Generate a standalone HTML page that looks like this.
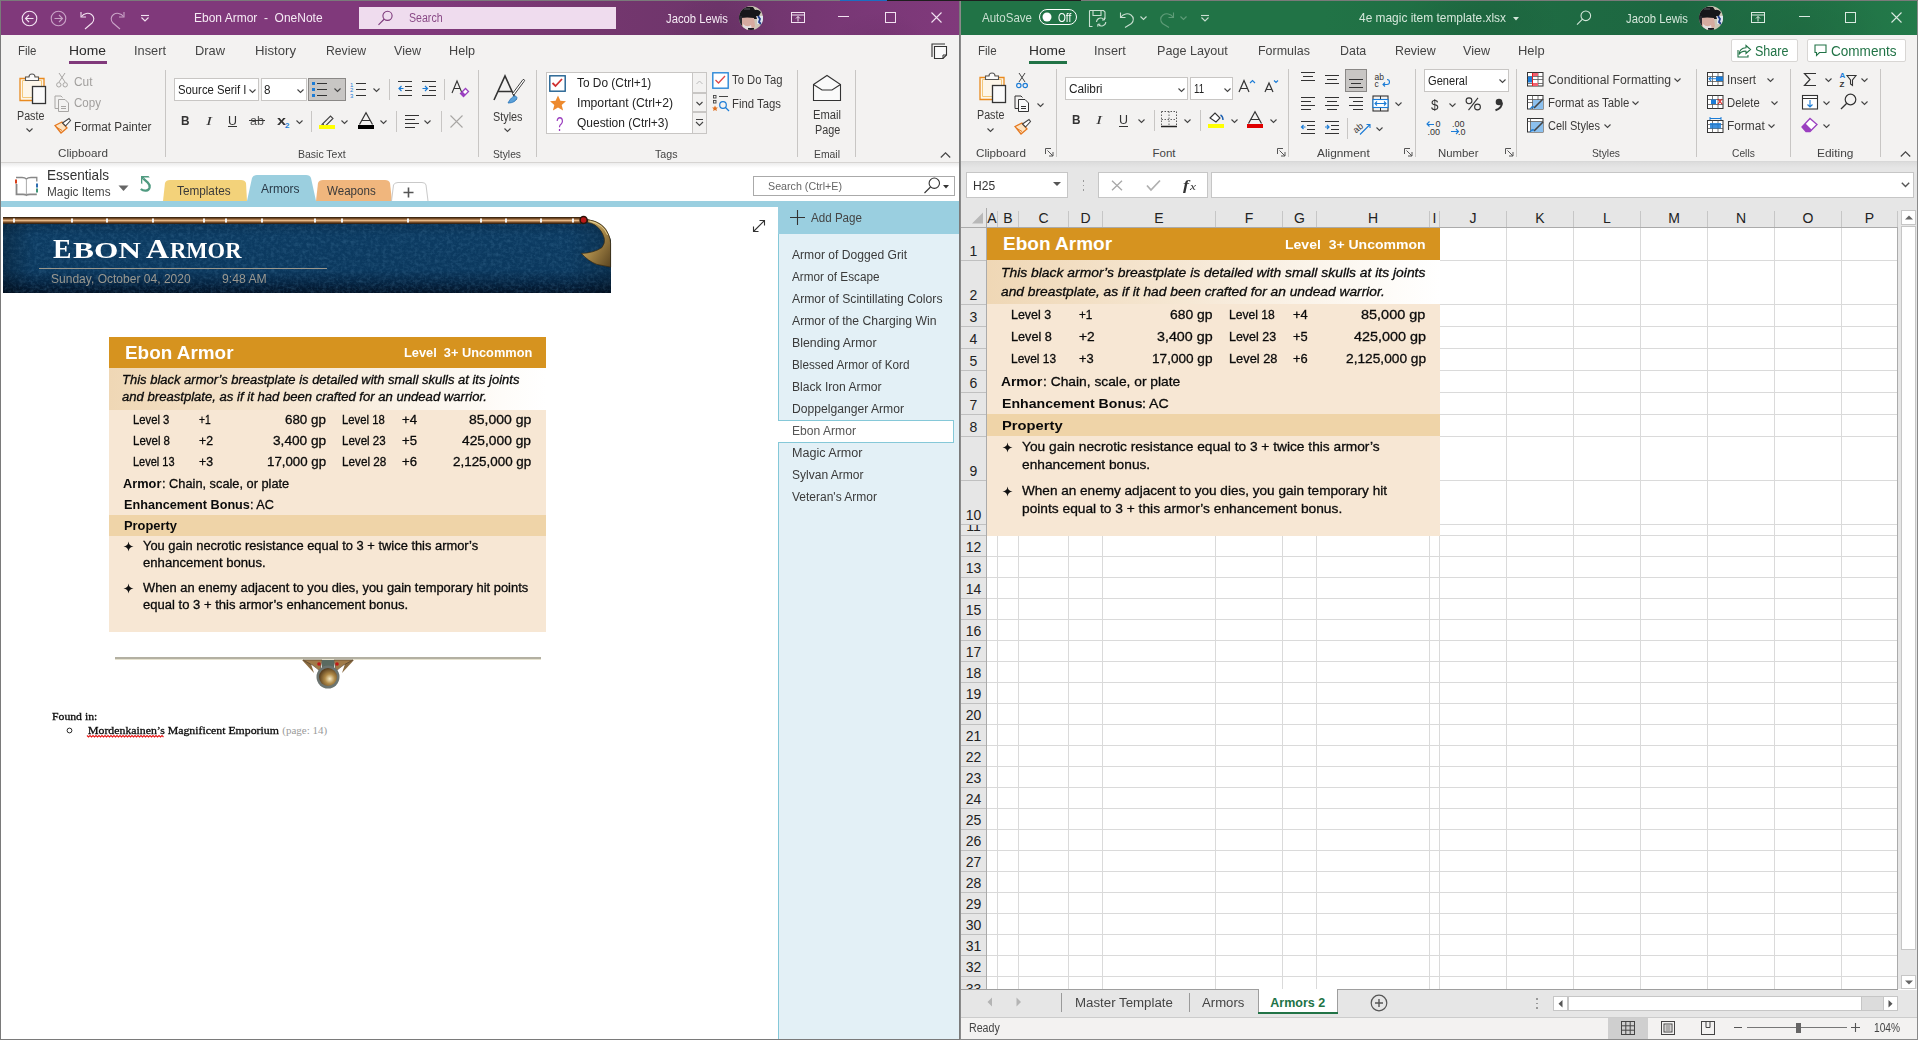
<!DOCTYPE html><html><head><meta charset="utf-8"><style>html,body{margin:0;padding:0;width:1918px;height:1040px;overflow:hidden;position:relative;background:#fff;font-family:'Liberation Sans',sans-serif}
.a{position:absolute;box-sizing:border-box}
svg.a{overflow:visible}
.t{position:absolute;white-space:pre;line-height:1;transform-origin:0 0}</style></head><body><div class="a" style="left:0px;top:0px;width:1918px;height:1px;background:#7a7a7a;"></div>
<div class="a" style="left:840px;top:0px;width:47px;height:1px;background:#1b6ec2;"></div>
<div class="a" style="left:887px;top:0px;width:194px;height:1px;background:#1e1e1e;"></div>
<div class="a" style="left:0;top:1px;width:960px;height:34px;background:linear-gradient(90deg,#80397b 0%,#80397b 45%,#75376f 60%,#6e356b 75%,#7a3877 90%,#80397b 100%)"></div>
<div class="a" style="left:640px;top:1px;width:300px;height:34px;background:radial-gradient(ellipse 60px 40px at 80px 30px,rgba(0,0,0,0.06),transparent),radial-gradient(ellipse 50px 30px at 240px 40px,rgba(0,0,0,0.05),transparent)"></div>
<div class="a" style="left:0px;top:0px;width:1px;height:1040px;background:#7a7a7a;"></div>
<svg class="a" style="left:21px;top:10px;" width="17" height="17" viewBox="0 0 17 17"><circle cx="8.5" cy="8.5" r="7.3" fill="none" stroke="#f2e2f1" stroke-width="1.1"/><path d="M4.5 8.5h8M8 5L4.5 8.5 8 12" fill="none" stroke="#f2e2f1" stroke-width="1.1"/></svg>
<svg class="a" style="left:50px;top:10px;" width="17" height="17" viewBox="0 0 17 17"><circle cx="8.5" cy="8.5" r="7.3" fill="none" stroke="#c9a3c7" stroke-width="1.1"/><path d="M4.5 8.5h8M9 5l3.5 3.5L9 12" fill="none" stroke="#c9a3c7" stroke-width="1.1"/></svg>
<svg class="a" style="left:79px;top:10px;" width="17" height="18" viewBox="0 0 17 18"><path d="M2 2v5h5" fill="none" stroke="#f2e2f1" stroke-width="1.1"/><path d="M2.5 6.5C5 3 9.5 2.5 12.5 4.5c3 2.2 3 6 0.5 8.5L6 19" fill="none" stroke="#f2e2f1" stroke-width="1.1"/></svg>
<svg class="a" style="left:109px;top:10px;" width="17" height="18" viewBox="0 0 17 18"><path d="M15 2v5h-5" fill="none" stroke="#c9a3c7" stroke-width="1.1"/><path d="M14.5 6.5C12 3 7.5 2.5 4.5 4.5c-3 2.2-3 6-0.5 8.5L11 19" fill="none" stroke="#c9a3c7" stroke-width="1.1"/></svg>
<svg class="a" style="left:140px;top:14px;" width="10" height="8" viewBox="0 0 10 8"><path d="M1 1.5h8" stroke="#f2e2f1" stroke-width="1.1"/><path d="M1.5 3.5L5 7l3.5-3.5" fill="none" stroke="#f2e2f1" stroke-width="1.1"/></svg>
<div class="t" style="left:194.4px;top:11px;font-family:'Liberation Sans', sans-serif;font-size:13px;font-weight:400;font-style:normal;color:#f6ebf5;transform:scaleX(0.9222);">Ebon Armor  -  OneNote</div>
<div class="a" style="left:359px;top:7px;width:257px;height:22px;background:#efdcee;"></div>
<svg class="a" style="left:377px;top:10px;" width="17" height="16" viewBox="0 0 17 16"><circle cx="10.5" cy="5.8" r="4.6" fill="none" stroke="#7d3a7b" stroke-width="1.1"/><path d="M7.3 9L1.5 14.8" stroke="#7d3a7b" stroke-width="1.1"/></svg>
<div class="t" style="left:409.4px;top:12px;font-family:'Liberation Sans', sans-serif;font-size:12.5px;font-weight:400;font-style:normal;color:#8a4a87;transform:scaleX(0.8483);">Search</div>
<div class="t" style="left:665.8px;top:12px;font-family:'Liberation Sans', sans-serif;font-size:13px;font-weight:400;font-style:normal;color:#f6ebf5;transform:scaleX(0.8666);">Jacob Lewis</div>
<svg class="a" style="left:739px;top:6px;" width="24" height="24" viewBox="0 0 24 24"><defs><clipPath id="cp739"><circle cx="12" cy="12" r="12"/></clipPath></defs><g clip-path="url(#cp739)"><rect width="24" height="24" fill="#cdc6b6"/><path d="M0 4Q6 0 14 1L16 4Q19 3 22 6L20 10H17L18 13H0z" fill="#17171a"/><path d="M5 2h6v2H5z" fill="#3a3a3e"/><path d="M2 12Q8 11 15 12L16 20Q14 24 9 24H3Q1 18 2 12z" fill="#d6aba0"/><path d="M4 18Q8 22 12 19L13 24H4z" fill="#e2dede"/><path d="M0 10H3V24H0z" fill="#2a2a30"/><path d="M9 22h6v2H9z" fill="#1a1a22"/><path d="M18 10h6v8h-6z" fill="#dfe6f0"/><path d="M19 10l2 3-1 3 2 2" fill="none" stroke="#233f8a" stroke-width="1.8"/></g></svg>
<svg class="a" style="left:791px;top:12px;" width="14" height="11" viewBox="0 0 14 11"><rect x="0.5" y="0.5" width="13" height="10" fill="none" stroke="#f2e2f1" stroke-width="1"/><path d="M0.5 3h13" stroke="#f2e2f1"/><path d="M7 9.5V4.5M5 6.5l2-2 2 2" fill="none" stroke="#f2e2f1"/></svg>
<svg class="a" style="left:838px;top:16px;" width="11" height="2" viewBox="0 0 11 2"><path d="M0 0.5h11" stroke="#f2e2f1" stroke-width="1"/></svg>
<svg class="a" style="left:884.7px;top:12px;" width="11" height="11" viewBox="0 0 11 11"><rect x="0.5" y="0.5" width="10" height="10" fill="none" stroke="#f2e2f1" stroke-width="1"/></svg>
<svg class="a" style="left:930.5px;top:12px;" width="11" height="11" viewBox="0 0 11 11"><path d="M0.5 0.5l10 10M10.5 0.5l-10 10" stroke="#f2e2f1" stroke-width="1.1"/></svg>
<div class="a" style="left:1px;top:35px;width:958px;height:127px;background:#f3f2f1;"></div>
<div class="a" style="left:1px;top:162px;width:958px;height:1px;background:#d6d4d2;"></div>
<div class="t" style="left:18.0px;top:44px;font-family:'Liberation Sans', sans-serif;font-size:13.5px;font-weight:400;font-style:normal;color:#444;transform:scaleX(0.8500);">File</div>
<div class="t" style="left:69.0px;top:44px;font-family:'Liberation Sans', sans-serif;font-size:13.5px;font-weight:400;font-style:normal;color:#2b2b2b;transform:scaleX(1.0273);">Home</div>
<div class="t" style="left:134.0px;top:44px;font-family:'Liberation Sans', sans-serif;font-size:13.5px;font-weight:400;font-style:normal;color:#444;transform:scaleX(0.9477);">Insert</div>
<div class="t" style="left:195.0px;top:44px;font-family:'Liberation Sans', sans-serif;font-size:13.5px;font-weight:400;font-style:normal;color:#444;transform:scaleX(0.9519);">Draw</div>
<div class="t" style="left:255.0px;top:44px;font-family:'Liberation Sans', sans-serif;font-size:13.5px;font-weight:400;font-style:normal;color:#444;transform:scaleX(0.9758);">History</div>
<div class="t" style="left:326.0px;top:44px;font-family:'Liberation Sans', sans-serif;font-size:13.5px;font-weight:400;font-style:normal;color:#444;transform:scaleX(0.9036);">Review</div>
<div class="t" style="left:394.0px;top:44px;font-family:'Liberation Sans', sans-serif;font-size:13.5px;font-weight:400;font-style:normal;color:#444;transform:scaleX(0.9300);">View</div>
<div class="t" style="left:449.0px;top:44px;font-family:'Liberation Sans', sans-serif;font-size:13.5px;font-weight:400;font-style:normal;color:#444;transform:scaleX(0.9364);">Help</div>
<div class="a" style="left:69px;top:61px;width:38px;height:3px;background:#80397b;"></div>
<div class="a" style="left:165px;top:70px;width:1px;height:87px;background:#c8c6c4;"></div>
<div class="a" style="left:478px;top:70px;width:1px;height:87px;background:#c8c6c4;"></div>
<div class="a" style="left:536px;top:70px;width:1px;height:87px;background:#c8c6c4;"></div>
<div class="a" style="left:797px;top:70px;width:1px;height:87px;background:#c8c6c4;"></div>
<div class="a" style="left:855px;top:70px;width:1px;height:87px;background:#c8c6c4;"></div>
<svg class="a" style="left:19px;top:73px;" width="28" height="32" viewBox="0 0 28 32"><path d="M1 5.5h6v-1h12v1h6v22H1z" fill="#fdf6e9" stroke="#e98a1f" stroke-width="1.3"/><path d="M3.5 7.5h19v17h-19z" fill="none" stroke="#f4c87a" stroke-width="1"/><path d="M6.5 7.5v-3.5h3.5c0-2 1-3 3-3s3 1 3 3h3.5v3.5z" fill="#fafafa" stroke="#555" stroke-width="1.1"/><rect x="13.5" y="13.5" width="13" height="17" fill="#fafafa" stroke="#333" stroke-width="1.3"/></svg>
<div class="t" style="left:16.6px;top:110px;font-family:'Liberation Sans', sans-serif;font-size:12.5px;font-weight:400;font-style:normal;color:#3b3a39;transform:scaleX(0.8571);">Paste</div>
<svg class="a" style="left:26px;top:128px;" width="7" height="4.5" viewBox="0 0 7 4.5"><path d="M0.5 0.5L3.5 3.5L6.5 0.5" fill="none" stroke="#444" stroke-width="1.1"/></svg>
<svg class="a" style="left:56px;top:72px;" width="12" height="16" viewBox="0 0 12 16"><path d="M3 1l6 9M9 1L3 10" stroke="#a8a6a4" stroke-width="1"/><circle cx="2.8" cy="12.8" r="2.2" fill="none" stroke="#a8a6a4"/><circle cx="9.2" cy="12.8" r="2.2" fill="none" stroke="#a8a6a4"/></svg>
<div class="t" style="left:73.5px;top:76px;font-family:'Liberation Sans', sans-serif;font-size:12.5px;font-weight:400;font-style:normal;color:#a19f9d;transform:scaleX(0.9510);">Cut</div>
<svg class="a" style="left:54px;top:95px;" width="17" height="17" viewBox="0 0 17 17"><path d="M4.5 13.5h-3.5v-12.5h6l1.5 1.5" fill="none" stroke="#a8a6a4"/><path d="M4.5 4.5h6.5l3.5 3.5v8.5h-10z" fill="none" stroke="#a8a6a4"/><path d="M7 11.5h5M7 13.5h5" stroke="#a8a6a4"/></svg>
<div class="t" style="left:73.5px;top:97px;font-family:'Liberation Sans', sans-serif;font-size:12.5px;font-weight:400;font-style:normal;color:#a19f9d;transform:scaleX(0.9251);">Copy</div>
<svg class="a" style="left:54px;top:118px;" width="17" height="16" viewBox="0 0 17 16"><path d="M1 7.5l7-3.5 5 6-6 5z" fill="#fde3c1" stroke="#e5781f" stroke-width="1.3"/><path d="M3 9.5l5 3" stroke="#e5781f"/><path d="M8.5 5l6.5-4.5 1.5 2-5 5.5z" fill="#fff" stroke="#444" stroke-width="1.1"/></svg>
<div class="t" style="left:73.5px;top:121px;font-family:'Liberation Sans', sans-serif;font-size:12.5px;font-weight:400;font-style:normal;color:#3b3a39;transform:scaleX(0.9374);">Format Painter</div>
<div class="t" style="left:57.5px;top:148px;font-family:'Liberation Sans', sans-serif;font-size:11.5px;font-weight:400;font-style:normal;color:#444;transform:scaleX(1.0156);">Clipboard</div>
<div class="a" style="left:174px;top:78px;width:85px;height:23px;background:#fff;border:1px solid #c8c6c4"></div>
<div class="t" style="left:177.5px;top:84px;font-family:'Liberation Sans', sans-serif;font-size:12.5px;font-weight:400;font-style:normal;color:#222;transform:scaleX(0.9045);">Source Serif I</div>
<svg class="a" style="left:249px;top:88.5px;" width="7" height="4.5" viewBox="0 0 7 4.5"><path d="M0.5 0.5L3.5 3.5L6.5 0.5" fill="none" stroke="#444" stroke-width="1.1"/></svg>
<div class="a" style="left:261px;top:78px;width:46px;height:23px;background:#fff;border:1px solid #c8c6c4"></div>
<div class="t" style="left:263.8px;top:84px;font-family:'Liberation Sans', sans-serif;font-size:12.5px;font-weight:400;font-style:normal;color:#222;transform:scaleX(0.9348);">8</div>
<svg class="a" style="left:297px;top:88.5px;" width="7" height="4.5" viewBox="0 0 7 4.5"><path d="M0.5 0.5L3.5 3.5L6.5 0.5" fill="none" stroke="#444" stroke-width="1.1"/></svg>
<div class="a" style="left:308px;top:78px;width:38px;height:23px;background:#c8c6c4;border:1px solid #8a8886"></div>
<svg class="a" style="left:311px;top:81px;" width="18" height="16" viewBox="0 0 18 16"><rect x="1" y="1" width="3" height="3" fill="#1c7cd6"/><rect x="1" y="7" width="3" height="3" fill="#1c7cd6"/><rect x="1" y="13" width="3" height="3" fill="#1c7cd6"/><path d="M6 2.5h10M6 8.5h10M6 14.5h10" stroke="#333" stroke-width="1.1"/></svg>
<svg class="a" style="left:334px;top:88px;" width="7" height="4.5" viewBox="0 0 7 4.5"><path d="M0.5 0.5L3.5 3.5L6.5 0.5" fill="none" stroke="#444" stroke-width="1.1"/></svg>
<svg class="a" style="left:350px;top:81px;" width="17" height="17" viewBox="0 0 17 17"><text x="0" y="5.5" font-size="6" font-family="Liberation Sans" fill="#1c7cd6">1</text><text x="0" y="11" font-size="6" font-family="Liberation Sans" fill="#1c7cd6">2</text><text x="0" y="16.5" font-size="6" font-family="Liberation Sans" fill="#1c7cd6">3</text><path d="M6 2.5h10M6 8.5h10M6 14.5h10" stroke="#333" stroke-width="1.1"/></svg>
<svg class="a" style="left:373px;top:88px;" width="7" height="4.5" viewBox="0 0 7 4.5"><path d="M0.5 0.5L3.5 3.5L6.5 0.5" fill="none" stroke="#444" stroke-width="1.1"/></svg>
<div class="a" style="left:389px;top:79px;width:1px;height:21px;background:#c8c6c4;"></div>
<svg class="a" style="left:398px;top:81px;" width="15" height="15" viewBox="0 0 15 15"><path d="M0 0.5h14M7 5.5h7M7 9.5h7M0 14.5h14" stroke="#333" stroke-width="1.1"/><path d="M5.5 7.5H1M3.5 5L1 7.5 3.5 10" fill="none" stroke="#1c7cd6" stroke-width="1.2"/></svg>
<svg class="a" style="left:422px;top:81px;" width="15" height="15" viewBox="0 0 15 15"><path d="M0 0.5h14M7 5.5h7M7 9.5h7M0 14.5h14" stroke="#333" stroke-width="1.1"/><path d="M0.5 7.5H5.5M3 5l2.5 2.5L3 10" fill="none" stroke="#1c7cd6" stroke-width="1.2"/></svg>
<div class="a" style="left:444px;top:79px;width:1px;height:21px;background:#c8c6c4;"></div>
<svg class="a" style="left:451px;top:80px;" width="18" height="18" viewBox="0 0 18 18"><path d="M1 13L6 1l5 12M3 8.5h6" fill="none" stroke="#333" stroke-width="1.1"/><path d="M9.5 13.5l5-5 3 3-5 5z" fill="#fff" stroke="#9a3fc0" stroke-width="1.3"/><path d="M9.5 13.5l2-2 3 3-2 2z" fill="#9a3fc0"/></svg>
<div class="t" style="left:181.0px;top:114px;font-family:'Liberation Sans', sans-serif;font-size:13px;font-weight:700;font-style:normal;color:#333;transform:scaleX(0.9052);">B</div>
<div class="t" style="left:205.5px;top:114px;font-family:'Liberation Serif', serif;font-size:13px;font-weight:400;font-style:italic;color:#333;transform:scaleX(1.3813);">I</div>
<div class="t" style="left:228.0px;top:114px;font-family:'Liberation Sans', sans-serif;font-size:13px;font-weight:400;font-style:normal;color:#333;transform:scaleX(0.9584);">U</div>
<div class="a" style="left:228px;top:126px;width:9px;height:1px;background:#333;"></div>
<div class="t" style="left:249.5px;top:115px;font-family:'Liberation Sans', sans-serif;font-size:12.5px;font-weight:400;font-style:normal;color:#555;transform:scaleX(1.0067);">ab</div>
<div class="a" style="left:249px;top:120px;width:16px;height:1px;background:#333;"></div>
<div class="t" style="left:277.0px;top:114px;font-family:'Liberation Sans', sans-serif;font-size:13px;font-weight:700;font-style:normal;color:#333;transform:scaleX(1.2441);">x</div>
<div class="t" style="left:285.0px;top:122px;font-family:'Liberation Sans', sans-serif;font-size:8px;font-weight:700;font-style:normal;color:#1c7cd6;">2</div>
<svg class="a" style="left:296px;top:120px;" width="7" height="4.5" viewBox="0 0 7 4.5"><path d="M0.5 0.5L3.5 3.5L6.5 0.5" fill="none" stroke="#444" stroke-width="1.1"/></svg>
<div class="a" style="left:311px;top:111px;width:1px;height:21px;background:#c8c6c4;"></div>
<svg class="a" style="left:319px;top:113px;" width="17" height="16" viewBox="0 0 17 16"><path d="M3 11.5L11.5 3l2.5 2.5L5.5 14H3z" fill="none" stroke="#444" stroke-width="1.1"/><path d="M1.5 14L5 11" stroke="#444"/></svg>
<div class="a" style="left:319px;top:125px;width:16px;height:4px;background:#ffff00;"></div>
<svg class="a" style="left:341px;top:120px;" width="7" height="4.5" viewBox="0 0 7 4.5"><path d="M0.5 0.5L3.5 3.5L6.5 0.5" fill="none" stroke="#444" stroke-width="1.1"/></svg>
<svg class="a" style="left:358px;top:112px;" width="16" height="13" viewBox="0 0 16 13"><path d="M1.5 12.5L8 0.8l6.5 11.7M4 8.5h8" fill="none" stroke="#333" stroke-width="1.2"/></svg>
<div class="a" style="left:358px;top:125px;width:16px;height:4px;background:#000;"></div>
<svg class="a" style="left:380px;top:120px;" width="7" height="4.5" viewBox="0 0 7 4.5"><path d="M0.5 0.5L3.5 3.5L6.5 0.5" fill="none" stroke="#444" stroke-width="1.1"/></svg>
<div class="a" style="left:396px;top:111px;width:1px;height:21px;background:#c8c6c4;"></div>
<svg class="a" style="left:405px;top:114px;" width="15" height="14" viewBox="0 0 15 14"><path d="M0 1.5h14M0 5.5h10M0 9.5h14M0 13.5h10" stroke="#333" stroke-width="1.1"/></svg>
<svg class="a" style="left:424px;top:120px;" width="7" height="4.5" viewBox="0 0 7 4.5"><path d="M0.5 0.5L3.5 3.5L6.5 0.5" fill="none" stroke="#444" stroke-width="1.1"/></svg>
<div class="a" style="left:441px;top:111px;width:1px;height:21px;background:#c8c6c4;"></div>
<svg class="a" style="left:450px;top:115px;" width="13" height="13" viewBox="0 0 13 13"><path d="M0.5 0.5l12 12M12.5 0.5l-12 12" stroke="#a8a6a4" stroke-width="1.1"/></svg>
<div class="t" style="left:298.0px;top:149px;font-family:'Liberation Sans', sans-serif;font-size:11.5px;font-weight:400;font-style:normal;color:#444;transform:scaleX(0.9118);">Basic Text</div>
<svg class="a" style="left:493px;top:75px;" width="32" height="30" viewBox="0 0 32 30"><path d="M1 25L12 1l11 24M5.5 16.5h13" fill="none" stroke="#333" stroke-width="1.6"/><path d="M31 5L20 20" stroke="#444" stroke-width="1.1"/><path d="M31 4.5c1 0.5 0.5 1.5 0 2L21 20l-1.5-1.5L30 4.5z" fill="#fff" stroke="#444"/><path d="M15 28c2-4 5-7 7-7 1 0 2 1 2 2-1 3-4 5-9 5z" fill="#5aa0d8" stroke="#2b73b8" stroke-width="0.8"/></svg>
<div class="t" style="left:493.0px;top:111px;font-family:'Liberation Sans', sans-serif;font-size:12.5px;font-weight:400;font-style:normal;color:#3b3a39;transform:scaleX(0.8665);">Styles</div>
<svg class="a" style="left:504px;top:128px;" width="7" height="4.5" viewBox="0 0 7 4.5"><path d="M0.5 0.5L3.5 3.5L6.5 0.5" fill="none" stroke="#444" stroke-width="1.1"/></svg>
<div class="t" style="left:493.0px;top:149px;font-family:'Liberation Sans', sans-serif;font-size:11.5px;font-weight:400;font-style:normal;color:#444;transform:scaleX(0.8938);">Styles</div>
<div class="a" style="left:546px;top:72px;width:147px;height:62px;background:#fff;border:1px solid #c8c6c4"></div>
<svg class="a" style="left:549px;top:75px;" width="18" height="17" viewBox="0 0 18 17"><rect x="0.8" y="0.8" width="15.4" height="15.4" fill="#fff" stroke="#1f5f8f" stroke-width="1.4"/><path d="M3.5 8l3 3 6.5-7" fill="none" stroke="#d03030" stroke-width="1.8"/></svg>
<div class="t" style="left:577.0px;top:77px;font-family:'Liberation Sans', sans-serif;font-size:12.5px;font-weight:400;font-style:normal;color:#222;transform:scaleX(0.9507);">To Do (Ctrl+1)</div>
<svg class="a" style="left:549px;top:95px;" width="18" height="16" viewBox="0 0 18 16"><path d="M9 0.5l2.4 5.3 5.6 0.5-4.3 3.7 1.4 5.6L9 12.6 3.9 15.6l1.4-5.6L1 6.3l5.6-0.5z" fill="#ed8a2e"/></svg>
<div class="t" style="left:577.0px;top:97px;font-family:'Liberation Sans', sans-serif;font-size:12.5px;font-weight:400;font-style:normal;color:#222;transform:scaleX(0.9766);">Important (Ctrl+2)</div>
<div class="t" style="left:555.5px;top:114px;font-family:'Liberation Sans', sans-serif;font-size:20px;font-weight:400;font-style:normal;color:#9b3fbf;transform:scaleX(0.6742);font-weight:300;">?</div>
<div class="t" style="left:577.0px;top:117px;font-family:'Liberation Sans', sans-serif;font-size:12.5px;font-weight:400;font-style:normal;color:#222;transform:scaleX(0.9578);">Question (Ctrl+3)</div>
<div class="a" style="left:692px;top:72px;width:15px;height:21px;background:#f3f2f1;border:1px solid #c8c6c4"></div>
<svg class="a" style="left:696px;top:80px;" width="8" height="5" viewBox="0 0 8 5"><path d="M0.5 4L3.5 1 6.5 4" fill="none" stroke="#bbb" stroke-width="1"/></svg>
<div class="a" style="left:692px;top:93px;width:15px;height:19px;background:#f3f2f1;border:1px solid #c8c6c4"></div>
<svg class="a" style="left:696px;top:101px;" width="8" height="5" viewBox="0 0 8 5"><path d="M0.5 1L3.5 4 6.5 1" fill="none" stroke="#444" stroke-width="1.1"/></svg>
<div class="a" style="left:692px;top:112px;width:15px;height:22px;background:#f3f2f1;border:1px solid #c8c6c4"></div>
<svg class="a" style="left:695px;top:118px;" width="9" height="9" viewBox="0 0 9 9"><path d="M1 1.5h7" stroke="#444"/><path d="M1 4l3.5 3.5L8 4" fill="none" stroke="#444" stroke-width="1.1"/></svg>
<svg class="a" style="left:712px;top:72px;" width="18" height="17" viewBox="0 0 18 17"><rect x="0.8" y="0.8" width="15.4" height="15.4" fill="#fff" stroke="#2b88d8" stroke-width="1.4"/><path d="M3.5 8l3 3 6.5-7" fill="none" stroke="#e04848" stroke-width="1.3"/></svg>
<div class="t" style="left:732.0px;top:74px;font-family:'Liberation Sans', sans-serif;font-size:12.5px;font-weight:400;font-style:normal;color:#3b3a39;transform:scaleX(0.9008);">To Do Tag</div>
<svg class="a" style="left:713px;top:95px;" width="17" height="17" viewBox="0 0 17 17"><rect x="0.5" y="0.5" width="2.5" height="2.5" fill="none" stroke="#444" stroke-width="0.9"/><rect x="0.5" y="5.5" width="2.5" height="2.5" fill="none" stroke="#444" stroke-width="0.9"/><path d="M6 1.5h9" stroke="#444"/><circle cx="10" cy="10" r="3.3" fill="none" stroke="#1c7cd6" stroke-width="1.2"/><path d="M12.5 12.5l3.5 3.5" stroke="#1c7cd6" stroke-width="1.3"/><path d="M2 10.5l0.9 1.9 2 0.2-1.5 1.3 0.5 2L2 14.9 0.1 15.9l0.5-2-1.5-1.3 2-0.2z" fill="#e07020"/></svg>
<div class="t" style="left:732.0px;top:98px;font-family:'Liberation Sans', sans-serif;font-size:12.5px;font-weight:400;font-style:normal;color:#3b3a39;transform:scaleX(0.9079);">Find Tags</div>
<div class="t" style="left:655.0px;top:149px;font-family:'Liberation Sans', sans-serif;font-size:11.5px;font-weight:400;font-style:normal;color:#444;transform:scaleX(0.9260);">Tags</div>
<svg class="a" style="left:812px;top:74px;" width="30" height="28" viewBox="0 0 30 28"><path d="M1.5 10.5L15 1.5l13.5 9v16h-27z" fill="#fafafa" stroke="#333" stroke-width="1.1"/><path d="M1.5 10.5l8.5 5.5h10l8.5-5.5" fill="none" stroke="#333" stroke-width="1.1"/></svg>
<div class="t" style="left:813.0px;top:109px;font-family:'Liberation Sans', sans-serif;font-size:12.5px;font-weight:400;font-style:normal;color:#3b3a39;transform:scaleX(0.8956);">Email</div>
<div class="t" style="left:814.7px;top:124px;font-family:'Liberation Sans', sans-serif;font-size:12.5px;font-weight:400;font-style:normal;color:#3b3a39;transform:scaleX(0.8663);">Page</div>
<div class="t" style="left:813.6px;top:149px;font-family:'Liberation Sans', sans-serif;font-size:11.5px;font-weight:400;font-style:normal;color:#444;transform:scaleX(0.9039);">Email</div>
<svg class="a" style="left:931px;top:43px;" width="17" height="17" viewBox="0 0 17 17"><path d="M1 14V1h13" fill="none" stroke="#333" stroke-width="1.1"/><path d="M3.5 3.5h12v8.5l-3.5 3.5h-8.5z" fill="#fafafa" stroke="#333" stroke-width="1.1"/><path d="M12 15.5v-3.5h3.5" fill="none" stroke="#333"/></svg>
<svg class="a" style="left:940px;top:152px;" width="11" height="7" viewBox="0 0 11 7"><path d="M0.8 5.5L5.5 0.8l4.7 4.7" fill="none" stroke="#444" stroke-width="1.2"/></svg>
<div class="a" style="left:1px;top:163px;width:958px;height:38px;background:linear-gradient(#ececec,#fff 5px,#fff)"></div>
<svg class="a" style="left:14px;top:176px;" width="25" height="21" viewBox="0 0 25 21"><path d="M2 1.5H8Q11 1.5 12.4 3Q13.8 1.5 17 1.5H22.8V5.5" fill="none" stroke="#888" stroke-width="1.3"/><path d="M2.5 8V18.3H9Q11.5 18.3 12.4 19Q13.3 18.3 16 18.3H22.8" fill="none" stroke="#888" stroke-width="1.8"/><path d="M12.4 3V18.5" stroke="#aaa" stroke-width="1"/><rect x="1" y="3.5" width="2" height="4" fill="#d8401a"/><rect x="22" y="7.5" width="2" height="4" fill="#2d6db0"/><rect x="22" y="12.5" width="2" height="4" fill="#3f9478"/></svg>
<div class="t" style="left:47.0px;top:168px;font-family:'Liberation Sans', sans-serif;font-size:14.5px;font-weight:400;font-style:normal;color:#333;transform:scaleX(0.9381);">Essentials</div>
<div class="t" style="left:47.0px;top:186px;font-family:'Liberation Sans', sans-serif;font-size:12.5px;font-weight:400;font-style:normal;color:#444;transform:scaleX(0.9438);">Magic Items</div>
<svg class="a" style="left:118px;top:185px;" width="11" height="6" viewBox="0 0 11 6"><path d="M0.5 0.5h10l-5 5.5z" fill="#666"/></svg>
<svg class="a" style="left:139px;top:175px;" width="13" height="17" viewBox="0 0 13 17"><path d="M2 1H9.5L10.8 2.6H5.3L3.3 4.6V9.2L2 8.2Z" fill="#4f9a80"/><path d="M4.3 3.6L8.8 7.6Q11 9.8 10.6 12.4Q10 15.2 7 15.6Q4 15.9 1.8 14" fill="none" stroke="#4f9a80" stroke-width="2.3"/></svg>
<svg class="a" style="left:161px;top:174px;" width="270" height="28" viewBox="0 0 270 28"><path d="M2 27L4 9Q5 6 9 6H80Q84 6 85 9L86 27z" fill="#f3d27a"/><path d="M86 27L91 4Q92 1 96 1H145Q149 1 150 4L155 27z" fill="#9bcfdf"/><path d="M155 27L157 9Q158 6 162 6H224Q228 6 229 9L231 27z" fill="#f0b67d"/><path d="M230.5 27L232.5 11Q233.5 8.5 237 8.5H261Q264.5 8.5 265 11L267 27" fill="#fff" stroke="#c9c9c9" stroke-width="1"/></svg>
<div class="t" style="left:177.4px;top:185px;font-family:'Liberation Sans', sans-serif;font-size:12.5px;font-weight:400;font-style:normal;color:#3a3a3a;transform:scaleX(0.9406);">Templates</div>
<div class="t" style="left:261.4px;top:183px;font-family:'Liberation Sans', sans-serif;font-size:12.5px;font-weight:400;font-style:normal;color:#2a3a48;transform:scaleX(0.9583);">Armors</div>
<div class="t" style="left:327.3px;top:185px;font-family:'Liberation Sans', sans-serif;font-size:12.5px;font-weight:400;font-style:normal;color:#3a3a3a;transform:scaleX(0.9260);">Weapons</div>
<svg class="a" style="left:403px;top:187px;" width="11" height="11" viewBox="0 0 11 11"><path d="M5.5 0.5v10M0.5 5.5h10" stroke="#555" stroke-width="1.6"/></svg>
<div class="a" style="left:753px;top:176px;width:202px;height:20px;background:#fff;border:1px solid #aaa"></div>
<div class="t" style="left:767.5px;top:181px;font-family:'Liberation Sans', sans-serif;font-size:11px;font-weight:400;font-style:normal;color:#666;transform:scaleX(0.9723);">Search (Ctrl+E)</div>
<svg class="a" style="left:923px;top:177px;" width="18" height="17" viewBox="0 0 18 17"><circle cx="11.3" cy="6.2" r="5.2" fill="none" stroke="#333" stroke-width="1.1"/><path d="M7.5 10L1.5 16" stroke="#333" stroke-width="1.1"/></svg>
<svg class="a" style="left:943px;top:185px;" width="7" height="4" viewBox="0 0 7 4"><path d="M0 0h6L3 3.5z" fill="#333"/></svg>
<div class="a" style="left:1px;top:201px;width:958px;height:6px;background:#9acfe0;"></div>
<div class="a" style="left:778px;top:207px;width:181px;height:27px;background:#9acfe0;"></div>
<svg class="a" style="left:789px;top:209px;" width="17" height="17" viewBox="0 0 17 17"><path d="M8.5 1v15M1 8.5h15" stroke="#333" stroke-width="1.1"/></svg>
<div class="t" style="left:811.0px;top:212px;font-family:'Liberation Sans', sans-serif;font-size:12.5px;font-weight:400;font-style:normal;color:#444;transform:scaleX(0.9286);">Add Page</div>
<svg class="a" style="left:752px;top:219px;" width="14" height="14" viewBox="0 0 14 14"><path d="M1.5 12.5l11-11M7.5 1.5h5v5M1.5 7.5v5h5" fill="none" stroke="#333" stroke-width="1.1"/></svg>
<div class="a" style="left:778px;top:234px;width:181px;height:806px;background:#e3f0f6;"></div>
<div class="a" style="left:778px;top:234px;width:1px;height:806px;background:#85c8d8;"></div>
<div class="t" style="left:792.3px;top:249px;font-family:'Liberation Sans', sans-serif;font-size:12.5px;font-weight:400;font-style:normal;color:#3a3a3a;transform:scaleX(0.9680);">Armor of Dogged Grit</div>
<div class="t" style="left:792.3px;top:271px;font-family:'Liberation Sans', sans-serif;font-size:12.5px;font-weight:400;font-style:normal;color:#3a3a3a;transform:scaleX(0.9399);">Armor of Escape</div>
<div class="t" style="left:792.3px;top:293px;font-family:'Liberation Sans', sans-serif;font-size:12.5px;font-weight:400;font-style:normal;color:#3a3a3a;transform:scaleX(0.9759);">Armor of Scintillating Colors</div>
<div class="t" style="left:792.3px;top:315px;font-family:'Liberation Sans', sans-serif;font-size:12.5px;font-weight:400;font-style:normal;color:#3a3a3a;transform:scaleX(0.9765);">Armor of the Charging Win</div>
<div class="t" style="left:792.3px;top:337px;font-family:'Liberation Sans', sans-serif;font-size:12.5px;font-weight:400;font-style:normal;color:#3a3a3a;transform:scaleX(0.9887);">Blending Armor</div>
<div class="t" style="left:792.3px;top:359px;font-family:'Liberation Sans', sans-serif;font-size:12.5px;font-weight:400;font-style:normal;color:#3a3a3a;transform:scaleX(0.9395);">Blessed Armor of Kord</div>
<div class="t" style="left:792.3px;top:381px;font-family:'Liberation Sans', sans-serif;font-size:12.5px;font-weight:400;font-style:normal;color:#3a3a3a;transform:scaleX(0.9687);">Black Iron Armor</div>
<div class="t" style="left:792.3px;top:403px;font-family:'Liberation Sans', sans-serif;font-size:12.5px;font-weight:400;font-style:normal;color:#3a3a3a;transform:scaleX(0.9709);">Doppelganger Armor</div>
<div class="a" style="left:778px;top:420px;width:176px;height:23px;background:#fff;border:1px solid #85c8d8;border-left:none"></div>
<div class="t" style="left:792.3px;top:425px;font-family:'Liberation Sans', sans-serif;font-size:12.5px;font-weight:400;font-style:normal;color:#555;transform:scaleX(0.9695);">Ebon Armor</div>
<div class="t" style="left:792.3px;top:447px;font-family:'Liberation Sans', sans-serif;font-size:12.5px;font-weight:400;font-style:normal;color:#3a3a3a;transform:scaleX(1.0049);">Magic Armor</div>
<div class="t" style="left:792.3px;top:469px;font-family:'Liberation Sans', sans-serif;font-size:12.5px;font-weight:400;font-style:normal;color:#3a3a3a;transform:scaleX(0.9617);">Sylvan Armor</div>
<div class="t" style="left:792.3px;top:491px;font-family:'Liberation Sans', sans-serif;font-size:12.5px;font-weight:400;font-style:normal;color:#3a3a3a;transform:scaleX(0.9599);">Veteran's Armor</div>
<div class="a" style="left:959px;top:1px;width:1px;height:1039px;background:#7a7a7a;"></div>
<div class="a" style="left:0px;top:1039px;width:960px;height:1px;background:#7a7a7a;"></div>
<svg class="a" style="left:3px;top:217px" width="608" height="76" viewBox="0 0 608 76"><defs><filter id="noise" x="0" y="0" width="100%" height="100%"><feTurbulence type="fractalNoise" baseFrequency="0.25 0.3" numOctaves="3" seed="3"/><feColorMatrix values="0 0 0 0 0.16  0 0 0 0 0.38  0 0 0 0 0.6  2.0 0 0 0 -0.85"/></filter><filter id="noise2" x="0" y="0" width="100%" height="100%"><feTurbulence type="fractalNoise" baseFrequency="0.5" numOctaves="2" seed="11"/><feColorMatrix values="0 0 0 0 0.02  0 0 0 0 0.1  0 0 0 0 0.2  -2.5 0 0 0 1.3"/></filter><linearGradient id="bg1" x1="0" y1="0" x2="0" y2="1"><stop offset="0" stop-color="#082c4c"/><stop offset="0.25" stop-color="#0c3b62"/><stop offset="0.7" stop-color="#0b385e"/><stop offset="0.86" stop-color="#062644"/><stop offset="1" stop-color="#021226"/></linearGradient><linearGradient id="bg2" x1="0" y1="0" x2="1" y2="0"><stop offset="0" stop-color="#000" stop-opacity="0.25"/><stop offset="0.05" stop-color="#000" stop-opacity="0"/><stop offset="0.93" stop-color="#000" stop-opacity="0"/><stop offset="1" stop-color="#000" stop-opacity="0.2"/></linearGradient><linearGradient id="cu" x1="0" y1="0" x2="0" y2="1"><stop offset="0" stop-color="#241608"/><stop offset="0.28" stop-color="#8a5a30"/><stop offset="0.5" stop-color="#e6b888"/><stop offset="0.72" stop-color="#8a5a30"/><stop offset="1" stop-color="#20140a"/></linearGradient></defs><rect width="608" height="76" fill="url(#bg1)"/><rect width="608" height="76" filter="url(#noise)" opacity="0.22"/><rect width="608" height="76" filter="url(#noise2)" opacity="0.35"/><rect width="608" height="76" fill="url(#bg2)"/><rect x="0" y="0" width="578" height="7" fill="url(#cu)"/><rect x="10" y="1.5" width="2" height="4" fill="#f4f4f4"/><rect x="68" y="1.5" width="2" height="4" fill="#f4f4f4"/><rect x="103" y="1.5" width="2" height="4" fill="#f4f4f4"/><rect x="149" y="1.5" width="2" height="4" fill="#f4f4f4"/><rect x="200" y="1.5" width="2" height="4" fill="#f4f4f4"/><rect x="222" y="1.5" width="2" height="4" fill="#f4f4f4"/><rect x="258" y="1.5" width="2" height="4" fill="#f4f4f4"/><rect x="311" y="1.5" width="2" height="4" fill="#f4f4f4"/><rect x="338" y="1.5" width="2" height="4" fill="#f4f4f4"/><rect x="404" y="1.5" width="2" height="4" fill="#f4f4f4"/><rect x="477" y="1.5" width="2" height="4" fill="#f4f4f4"/><rect x="502" y="1.5" width="2" height="4" fill="#f4f4f4"/><rect x="537" y="1.5" width="2" height="4" fill="#f4f4f4"/><rect x="569" y="1.5" width="2" height="4" fill="#f4f4f4"/></svg>
<svg class="a" style="left:570px;top:212px;" width="44" height="62" viewBox="0 0 44 62"><defs><linearGradient id="gold" x1="0" y1="0" x2="1" y2="1"><stop offset="0" stop-color="#d8bc78"/><stop offset="0.5" stop-color="#a88848"/><stop offset="1" stop-color="#5a4420"/></linearGradient></defs><path d="M14 4H42V31.4Q40.6 27 38.8 23.1Q34 10 17.8 7.6Z" fill="#fff"/><path d="M17.8 7.6Q34 10 38.8 23.1Q40.6 27 40.6 31.4V55.1Q33 53.5 26.9 52.4Q18 49 11.4 41.4Q24 41 32 35.5Q35.5 31 34.2 26Q32 18 25.1 13.1Q21 10.5 17.8 10.6Z" fill="url(#gold)" stroke="#3a2a10" stroke-width="0.7"/><path d="M20 9.2Q33 12 37.6 23" fill="none" stroke="#f0dca0" stroke-width="1" opacity="0.8"/><circle cx="13.6" cy="8" r="4.3" fill="#2a1408"/><circle cx="13.6" cy="8" r="2.8" fill="#b81818"/></svg>
<div class="t" style="left:53.4px;top:235px;font-family:'Liberation Serif', serif;font-size:28px;font-weight:700;font-style:normal;color:#fff;transform:scaleX(0.9900);">E</div>
<div class="t" style="left:72.5px;top:239px;font-family:'Liberation Serif', serif;font-size:23px;font-weight:700;font-style:normal;color:#fff;transform:scaleX(1.3643);">BON</div>
<div class="t" style="left:145.5px;top:235px;font-family:'Liberation Serif', serif;font-size:28px;font-weight:700;font-style:normal;color:#fff;transform:scaleX(1.1367);">A</div>
<div class="t" style="left:169.5px;top:239px;font-family:'Liberation Serif', serif;font-size:23px;font-weight:700;font-style:normal;color:#fff;transform:scaleX(0.9818);">RMOR</div>
<div class="a" style="left:39px;top:268px;width:288px;height:1px;background:#9a978c;"></div>
<div class="t" style="left:51.3px;top:273px;font-family:'Liberation Sans', sans-serif;font-size:12.5px;font-weight:400;font-style:normal;color:#9a9890;transform:scaleX(0.9633);">Sunday, October 04, 2020</div>
<div class="t" style="left:222.0px;top:273px;font-family:'Liberation Sans', sans-serif;font-size:12.5px;font-weight:400;font-style:normal;color:#9a9890;transform:scaleX(0.9766);">9:48 AM</div>
<div class="a" style="left:109px;top:337px;width:437px;height:31px;background:#d6931f;"></div>
<div class="t" style="left:125.0px;top:343px;font-family:'Liberation Sans', sans-serif;font-size:19px;font-weight:700;font-style:normal;color:#fff;transform:scaleX(0.9947);">Ebon Armor</div>
<div class="t" style="left:403.7px;top:347px;font-family:'Liberation Sans', sans-serif;font-size:12.5px;font-weight:700;font-style:normal;color:#fff;transform:scaleX(1.0232);">Level  3+ Uncommon</div>
<div class="a" style="left:109px;top:368px;width:437px;height:42px;background:linear-gradient(90deg,#efd7b5 0%,#f6e8d5 45%,#fefcf9 90%,#fff 100%)"></div>
<div class="t" style="left:122.0px;top:374px;font-family:'Liberation Sans', sans-serif;font-size:12.5px;font-weight:400;font-style:italic;color:#0a0a0a;transform:scaleX(1.0394);-webkit-text-stroke:0.3px #0a0a0a;">This black armor’s breastplate is detailed with small skulls at its joints</div>
<div class="t" style="left:122.0px;top:391px;font-family:'Liberation Sans', sans-serif;font-size:12.5px;font-weight:400;font-style:italic;color:#0a0a0a;transform:scaleX(1.0477);-webkit-text-stroke:0.3px #0a0a0a;">and breastplate, as if it had been crafted for an undead warrior.</div>
<div class="a" style="left:109px;top:410px;width:437px;height:105px;background:#f7e7d4;"></div>
<div class="a" style="left:109px;top:515px;width:437px;height:21px;background:#efd4a8;"></div>
<div class="a" style="left:109px;top:536px;width:437px;height:96px;background:#f7e7d4;"></div>
<div class="t" style="left:133.1px;top:414px;font-family:'Liberation Sans', sans-serif;font-size:12.5px;font-weight:400;font-style:normal;color:#0a0a0a;transform:scaleX(0.9029);-webkit-text-stroke:0.3px #0a0a0a;">Level 3</div>
<div class="t" style="left:198.7px;top:414px;font-family:'Liberation Sans', sans-serif;font-size:12.5px;font-weight:400;font-style:normal;color:#0a0a0a;transform:scaleX(0.8202);-webkit-text-stroke:0.3px #0a0a0a;">+1</div>
<div class="t" style="left:284.9px;top:414px;font-family:'Liberation Sans', sans-serif;font-size:12.5px;font-weight:400;font-style:normal;color:#0a0a0a;transform:scaleX(1.0697);-webkit-text-stroke:0.3px #0a0a0a;">680 gp</div>
<div class="t" style="left:342.3px;top:414px;font-family:'Liberation Sans', sans-serif;font-size:12.5px;font-weight:400;font-style:normal;color:#0a0a0a;transform:scaleX(0.9034);-webkit-text-stroke:0.3px #0a0a0a;">Level 18</div>
<div class="t" style="left:402.3px;top:414px;font-family:'Liberation Sans', sans-serif;font-size:12.5px;font-weight:400;font-style:normal;color:#0a0a0a;transform:scaleX(1.0515);-webkit-text-stroke:0.3px #0a0a0a;">+4</div>
<div class="t" style="left:468.9px;top:414px;font-family:'Liberation Sans', sans-serif;font-size:12.5px;font-weight:400;font-style:normal;color:#0a0a0a;transform:scaleX(1.1203);-webkit-text-stroke:0.3px #0a0a0a;">85,000 gp</div>
<div class="t" style="left:133.1px;top:435px;font-family:'Liberation Sans', sans-serif;font-size:12.5px;font-weight:400;font-style:normal;color:#0a0a0a;transform:scaleX(0.9178);-webkit-text-stroke:0.3px #0a0a0a;">Level 8</div>
<div class="t" style="left:198.7px;top:435px;font-family:'Liberation Sans', sans-serif;font-size:12.5px;font-weight:400;font-style:normal;color:#0a0a0a;transform:scaleX(0.9814);-webkit-text-stroke:0.3px #0a0a0a;">+2</div>
<div class="t" style="left:272.6px;top:435px;font-family:'Liberation Sans', sans-serif;font-size:12.5px;font-weight:400;font-style:normal;color:#0a0a0a;transform:scaleX(1.0930);-webkit-text-stroke:0.3px #0a0a0a;">3,400 gp</div>
<div class="t" style="left:342.3px;top:435px;font-family:'Liberation Sans', sans-serif;font-size:12.5px;font-weight:400;font-style:normal;color:#0a0a0a;transform:scaleX(0.9246);-webkit-text-stroke:0.3px #0a0a0a;">Level 23</div>
<div class="t" style="left:402.3px;top:435px;font-family:'Liberation Sans', sans-serif;font-size:12.5px;font-weight:400;font-style:normal;color:#0a0a0a;transform:scaleX(1.0515);-webkit-text-stroke:0.3px #0a0a0a;">+5</div>
<div class="t" style="left:462.2px;top:435px;font-family:'Liberation Sans', sans-serif;font-size:12.5px;font-weight:400;font-style:normal;color:#0a0a0a;transform:scaleX(1.1029);-webkit-text-stroke:0.3px #0a0a0a;">425,000 gp</div>
<div class="t" style="left:133.1px;top:456px;font-family:'Liberation Sans', sans-serif;font-size:12.5px;font-weight:400;font-style:normal;color:#0a0a0a;transform:scaleX(0.8801);-webkit-text-stroke:0.3px #0a0a0a;">Level 13</div>
<div class="t" style="left:198.7px;top:456px;font-family:'Liberation Sans', sans-serif;font-size:12.5px;font-weight:400;font-style:normal;color:#0a0a0a;transform:scaleX(0.9814);-webkit-text-stroke:0.3px #0a0a0a;">+3</div>
<div class="t" style="left:266.7px;top:456px;font-family:'Liberation Sans', sans-serif;font-size:12.5px;font-weight:400;font-style:normal;color:#0a0a0a;transform:scaleX(1.0628);-webkit-text-stroke:0.3px #0a0a0a;">17,000 gp</div>
<div class="t" style="left:342.3px;top:456px;font-family:'Liberation Sans', sans-serif;font-size:12.5px;font-weight:400;font-style:normal;color:#0a0a0a;transform:scaleX(0.9373);-webkit-text-stroke:0.3px #0a0a0a;">Level 28</div>
<div class="t" style="left:402.3px;top:456px;font-family:'Liberation Sans', sans-serif;font-size:12.5px;font-weight:400;font-style:normal;color:#0a0a0a;transform:scaleX(1.0515);-webkit-text-stroke:0.3px #0a0a0a;">+6</div>
<div class="t" style="left:452.9px;top:456px;font-family:'Liberation Sans', sans-serif;font-size:12.5px;font-weight:400;font-style:normal;color:#0a0a0a;transform:scaleX(1.0726);-webkit-text-stroke:0.3px #0a0a0a;">2,125,000 gp</div>
<div class="t" style="left:123.4px;top:478px;font-family:'Liberation Sans', sans-serif;font-size:12.5px;font-weight:700;font-style:normal;color:#0a0a0a;transform:scaleX(1.0229);">Armor</div>
<div class="t" style="left:161.8px;top:478px;font-family:'Liberation Sans', sans-serif;font-size:12.5px;font-weight:400;font-style:normal;color:#0a0a0a;transform:scaleX(1.0229);-webkit-text-stroke:0.3px #0a0a0a;">: Chain, scale, or plate</div>
<div class="t" style="left:123.6px;top:499px;font-family:'Liberation Sans', sans-serif;font-size:12.5px;font-weight:700;font-style:normal;color:#0a0a0a;transform:scaleX(1.0125);">Enhancement Bonus</div>
<div class="t" style="left:249.5px;top:499px;font-family:'Liberation Sans', sans-serif;font-size:12.5px;font-weight:400;font-style:normal;color:#0a0a0a;transform:scaleX(1.0125);-webkit-text-stroke:0.3px #0a0a0a;">: AC</div>
<div class="t" style="left:123.6px;top:520px;font-family:'Liberation Sans', sans-serif;font-size:12.5px;font-weight:700;font-style:normal;color:#0a0a0a;transform:scaleX(1.0310);">Property</div>
<svg class="a" style="left:123px;top:541px;" width="11" height="11" viewBox="0 0 11 11"><path d="M5.5 0.5Q6 5 10.5 5.5Q6 6 5.5 10.5Q5 6 0.5 5.5Q5 5 5.5 0.5z" fill="#111"/></svg>
<svg class="a" style="left:123px;top:582.8px;" width="11" height="11" viewBox="0 0 11 11"><path d="M5.5 0.5Q6 5 10.5 5.5Q6 6 5.5 10.5Q5 6 0.5 5.5Q5 5 5.5 0.5z" fill="#111"/></svg>
<div class="t" style="left:143.1px;top:540px;font-family:'Liberation Sans', sans-serif;font-size:12.5px;font-weight:400;font-style:normal;color:#0a0a0a;transform:scaleX(1.0304);-webkit-text-stroke:0.3px #0a0a0a;">You gain necrotic resistance equal to 3 + twice this armor’s</div>
<div class="t" style="left:143.1px;top:557px;font-family:'Liberation Sans', sans-serif;font-size:12.5px;font-weight:400;font-style:normal;color:#0a0a0a;transform:scaleX(1.0500);-webkit-text-stroke:0.3px #0a0a0a;">enhancement bonus.</div>
<div class="t" style="left:143.1px;top:582px;font-family:'Liberation Sans', sans-serif;font-size:12.5px;font-weight:400;font-style:normal;color:#0a0a0a;transform:scaleX(1.0323);-webkit-text-stroke:0.3px #0a0a0a;">When an enemy adjacent to you dies, you gain temporary hit points</div>
<div class="t" style="left:143.1px;top:599px;font-family:'Liberation Sans', sans-serif;font-size:12.5px;font-weight:400;font-style:normal;color:#0a0a0a;transform:scaleX(1.0432);-webkit-text-stroke:0.3px #0a0a0a;">equal to 3 + this armor’s enhancement bonus.</div>
<div class="a" style="left:115px;top:657px;width:426px;height:2px;background:#b3b0a2;"></div>
<div class="a" style="left:115px;top:659px;width:426px;height:1px;background:#e6e2cf;"></div>
<svg class="a" style="left:300px;top:659px;" width="56" height="32" viewBox="0 0 56 32"><path d="M2 1L14 14L10 2z" fill="#8a6a40"/><path d="M54 1L42 14L46 2z" fill="#8a6a40"/><path d="M3 1Q14 6 20 12L22 1z" fill="#a07a48" stroke="#4a3a2a" stroke-width="0.6"/><path d="M53 1Q42 6 36 12L34 1z" fill="#a07a48" stroke="#4a3a2a" stroke-width="0.6"/><rect x="22" y="1" width="12" height="8" fill="#5a6a60"/><circle cx="19" cy="5" r="1.8" fill="#c01818"/><circle cx="37" cy="5" r="1.8" fill="#c01818"/><defs><radialGradient id="orb" cx="0.6" cy="0.6" r="0.6"><stop offset="0" stop-color="#f6ecc8"/><stop offset="0.45" stop-color="#b08a48"/><stop offset="1" stop-color="#5a4020"/></radialGradient></defs><circle cx="28" cy="18" r="11.5" fill="#6c7470"/><circle cx="28" cy="18" r="9" fill="url(#orb)"/></svg>
<div class="t" style="left:51.7px;top:711px;font-family:'Liberation Serif', serif;font-size:11px;font-weight:400;font-style:normal;color:#0a0a0a;transform:scaleX(1.0663);-webkit-text-stroke:0.3px #0a0a0a;">Found in:</div>
<svg class="a" style="left:66px;top:727px;" width="7" height="7" viewBox="0 0 7 7"><circle cx="3.5" cy="3.5" r="2.4" fill="none" stroke="#111" stroke-width="0.9"/></svg>
<div class="t" style="left:87.7px;top:725px;font-family:'Liberation Serif', serif;font-size:11px;font-weight:400;font-style:normal;color:#0a0a0a;transform:scaleX(1.0737);-webkit-text-stroke:0.3px #0a0a0a;">Mordenkainen’s Magnificent Emporium</div>
<div class="t" style="left:282.3px;top:725px;font-family:'Liberation Serif', serif;font-size:11px;font-weight:400;font-style:normal;color:#9a9a9a;">(page: 14)</div>
<svg class="a" style="left:87px;top:734px;" width="78" height="4" viewBox="0 0 78 4"><path d="M0 1.5 l1.5 1.5 l1.5 -1.5 l1.5 1.5 l1.5 -1.5 l1.5 1.5 l1.5 -1.5 l1.5 1.5 l1.5 -1.5 l1.5 1.5 l1.5 -1.5 l1.5 1.5 l1.5 -1.5 l1.5 1.5 l1.5 -1.5 l1.5 1.5 l1.5 -1.5 l1.5 1.5 l1.5 -1.5 l1.5 1.5 l1.5 -1.5 l1.5 1.5 l1.5 -1.5 l1.5 1.5 l1.5 -1.5 l1.5 1.5 l1.5 -1.5 l1.5 1.5 l1.5 -1.5 l1.5 1.5 l1.5 -1.5 l1.5 1.5 l1.5 -1.5 l1.5 1.5 l1.5 -1.5 l1.5 1.5 l1.5 -1.5 l1.5 1.5 l1.5 -1.5 l1.5 1.5 l1.5 -1.5 l1.5 1.5 l1.5 -1.5 l1.5 1.5 l1.5 -1.5 l1.5 1.5 l1.5 -1.5 l1.5 1.5 l1.5 -1.5 l1.5 1.5 l1.5 -1.5 l1.5 1.5" fill="none" stroke="#e81818" stroke-width="1.1"/></svg>
<div class="a" style="left:960px;top:1px;width:958px;height:34px;background:linear-gradient(90deg,#217346 0%,#217346 38%,#1f6c43 55%,#1d6741 75%,#217346 92%,#237a4a 100%)"></div>
<div class="a" style="left:1380px;top:1px;width:520px;height:34px;background:radial-gradient(ellipse 80px 40px at 100px 20px,rgba(0,0,0,0.07),transparent),radial-gradient(ellipse 90px 45px at 420px 30px,rgba(0,0,0,0.05),transparent)"></div>
<div class="a" style="left:960px;top:1px;width:1px;height:1039px;background:#8a8a8a;"></div>
<div class="t" style="left:982.0px;top:11px;font-family:'Liberation Sans', sans-serif;font-size:13px;font-weight:400;font-style:normal;color:#c9dfd1;transform:scaleX(0.8869);">AutoSave</div>
<div class="a" style="left:1039px;top:9px;width:38px;height:16px;border:1.3px solid #fff;border-radius:8px"></div>
<svg class="a" style="left:1042px;top:12px;" width="10" height="10" viewBox="0 0 10 10"><circle cx="5" cy="5" r="4.5" fill="#fff"/></svg>
<div class="t" style="left:1058.0px;top:12px;font-family:'Liberation Sans', sans-serif;font-size:12.5px;font-weight:400;font-style:normal;color:#fff;transform:scaleX(0.8023);">Off</div>
<svg class="a" style="left:1089px;top:10px;" width="19" height="18" viewBox="0 0 19 18"><path d="M0.5 0.5h14l1.5 1.5v7M0.5 0.5v16l3 0" fill="none" stroke="#c9dfd1" stroke-width="1.1"/><path d="M4 0.5v5h8v-5" fill="none" stroke="#c9dfd1" stroke-width="1.1"/><path d="M7.5 12a4.2 4.2 0 0 1 7.5-2.3M16.8 12a4.2 4.2 0 0 1-7.5 2.3" fill="none" stroke="#c9dfd1" stroke-width="1.1"/><path d="M15.5 7.5v2.5h-2.5M8.8 16.7v-2.5h2.5" fill="none" stroke="#c9dfd1" stroke-width="1"/></svg>
<svg class="a" style="left:1119px;top:11px;" width="17" height="17" viewBox="0 0 17 17"><path d="M1.5 1.5v5h5" fill="none" stroke="#c9dfd1" stroke-width="1.1"/><path d="M2 6C4.5 2.5 9 2 12 4c3 2.2 3 6 0.5 8.5L6 16.5" fill="none" stroke="#c9dfd1" stroke-width="1.1"/></svg>
<svg class="a" style="left:1140px;top:16px;" width="7" height="4.5" viewBox="0 0 7 4.5"><path d="M0.5 0.5L3.5 3.5L6.5 0.5" fill="none" stroke="#c9dfd1" stroke-width="1.1"/></svg>
<svg class="a" style="left:1158px;top:11px;" width="17" height="17" viewBox="0 0 17 17"><path d="M15.5 1.5v5h-5" fill="none" stroke="#5f9c78" stroke-width="1.1"/><path d="M15 6C12.5 2.5 8 2 5 4c-3 2.2-3 6-0.5 8.5L11 16.5" fill="none" stroke="#5f9c78" stroke-width="1.1"/></svg>
<svg class="a" style="left:1180px;top:16px;" width="7" height="4.5" viewBox="0 0 7 4.5"><path d="M0.5 0.5L3.5 3.5L6.5 0.5" fill="none" stroke="#5f9c78" stroke-width="1.1"/></svg>
<svg class="a" style="left:1200px;top:14px;" width="10" height="8" viewBox="0 0 10 8"><path d="M1 1.5h8" stroke="#c9dfd1" stroke-width="1.1"/><path d="M1.5 3.5L5 7l3.5-3.5" fill="none" stroke="#c9dfd1" stroke-width="1.1"/></svg>
<div class="t" style="left:1359.0px;top:11px;font-family:'Liberation Sans', sans-serif;font-size:13px;font-weight:400;font-style:normal;color:#d5e7db;transform:scaleX(0.9164);">4e magic item template.xlsx</div>
<svg class="a" style="left:1513px;top:17px;" width="7" height="4" viewBox="0 0 7 4"><path d="M0 0h6L3 3.5z" fill="#d5e7db"/></svg>
<svg class="a" style="left:1576px;top:10px;" width="16" height="16" viewBox="0 0 16 16"><circle cx="9.8" cy="5.8" r="4.8" fill="none" stroke="#d5e7db" stroke-width="1.1"/><path d="M6.5 9.2L1 14.7" stroke="#d5e7db" stroke-width="1.1"/></svg>
<div class="t" style="left:1626.0px;top:12px;font-family:'Liberation Sans', sans-serif;font-size:13px;font-weight:400;font-style:normal;color:#d5e7db;transform:scaleX(0.8666);">Jacob Lewis</div>
<svg class="a" style="left:1699px;top:6px;" width="24" height="24" viewBox="0 0 24 24"><defs><clipPath id="cp1699"><circle cx="12" cy="12" r="12"/></clipPath></defs><g clip-path="url(#cp1699)"><rect width="24" height="24" fill="#cdc6b6"/><path d="M0 4Q6 0 14 1L16 4Q19 3 22 6L20 10H17L18 13H0z" fill="#17171a"/><path d="M5 2h6v2H5z" fill="#3a3a3e"/><path d="M2 12Q8 11 15 12L16 20Q14 24 9 24H3Q1 18 2 12z" fill="#d6aba0"/><path d="M4 18Q8 22 12 19L13 24H4z" fill="#e2dede"/><path d="M0 10H3V24H0z" fill="#2a2a30"/><path d="M9 22h6v2H9z" fill="#1a1a22"/><path d="M18 10h6v8h-6z" fill="#dfe6f0"/><path d="M19 10l2 3-1 3 2 2" fill="none" stroke="#233f8a" stroke-width="1.8"/></g></svg>
<svg class="a" style="left:1751px;top:12px;" width="14" height="11" viewBox="0 0 14 11"><rect x="0.5" y="0.5" width="13" height="10" fill="none" stroke="#dbeae1" stroke-width="1"/><path d="M0.5 3h13" stroke="#dbeae1"/><path d="M7 9.5V4.5M5 6.5l2-2 2 2" fill="none" stroke="#dbeae1"/></svg>
<svg class="a" style="left:1799px;top:16px;" width="11" height="2" viewBox="0 0 11 2"><path d="M0 0.5h11" stroke="#dbeae1" stroke-width="1"/></svg>
<svg class="a" style="left:1845px;top:12px;" width="11" height="11" viewBox="0 0 11 11"><rect x="0.5" y="0.5" width="10" height="10" fill="none" stroke="#dbeae1" stroke-width="1"/></svg>
<svg class="a" style="left:1891px;top:12px;" width="11" height="11" viewBox="0 0 11 11"><path d="M0.5 0.5l10 10M10.5 0.5l-10 10" stroke="#dbeae1" stroke-width="1.1"/></svg>
<div class="a" style="left:961px;top:35px;width:957px;height:126px;background:#f3f2f1;"></div>
<div class="t" style="left:978.0px;top:44px;font-family:'Liberation Sans', sans-serif;font-size:13.5px;font-weight:400;font-style:normal;color:#444;transform:scaleX(0.8546);">File</div>
<div class="t" style="left:1029.4px;top:44px;font-family:'Liberation Sans', sans-serif;font-size:13.5px;font-weight:400;font-style:normal;color:#2b2b2b;transform:scaleX(1.0162);">Home</div>
<div class="t" style="left:1093.8px;top:44px;font-family:'Liberation Sans', sans-serif;font-size:13.5px;font-weight:400;font-style:normal;color:#444;transform:scaleX(0.9418);">Insert</div>
<div class="t" style="left:1157.0px;top:44px;font-family:'Liberation Sans', sans-serif;font-size:13.5px;font-weight:400;font-style:normal;color:#444;transform:scaleX(0.9339);">Page Layout</div>
<div class="t" style="left:1258.0px;top:44px;font-family:'Liberation Sans', sans-serif;font-size:13.5px;font-weight:400;font-style:normal;color:#444;transform:scaleX(0.9242);">Formulas</div>
<div class="t" style="left:1339.7px;top:44px;font-family:'Liberation Sans', sans-serif;font-size:13.5px;font-weight:400;font-style:normal;color:#444;transform:scaleX(0.9218);">Data</div>
<div class="t" style="left:1395.0px;top:44px;font-family:'Liberation Sans', sans-serif;font-size:13.5px;font-weight:400;font-style:normal;color:#444;transform:scaleX(0.9172);">Review</div>
<div class="t" style="left:1463.0px;top:44px;font-family:'Liberation Sans', sans-serif;font-size:13.5px;font-weight:400;font-style:normal;color:#444;transform:scaleX(0.9300);">View</div>
<div class="t" style="left:1518.4px;top:44px;font-family:'Liberation Sans', sans-serif;font-size:13.5px;font-weight:400;font-style:normal;color:#444;transform:scaleX(0.9580);">Help</div>
<div class="a" style="left:1029px;top:61px;width:38px;height:3px;background:#217346;"></div>
<div class="a" style="left:1731px;top:39px;width:67px;height:23px;background:#fff;border:1px solid #d8d6d4;border-radius:2px"></div>
<svg class="a" style="left:1737px;top:44px;" width="15" height="14" viewBox="0 0 15 14"><path d="M9 1.5l4.5 4-4.5 4v-2.3C6 7 3.5 8 2 10.5 2.3 6.5 5 4 9 3.8z" fill="none" stroke="#217346" stroke-width="1.1"/><path d="M1 6v7h10v-2" fill="none" stroke="#217346" stroke-width="1.1"/></svg>
<div class="t" style="left:1755.0px;top:44px;font-family:'Liberation Sans', sans-serif;font-size:14px;font-weight:400;font-style:normal;color:#217346;transform:scaleX(0.8967);">Share</div>
<div class="a" style="left:1807px;top:39px;width:99px;height:23px;background:#fff;border:1px solid #d8d6d4;border-radius:2px"></div>
<svg class="a" style="left:1814px;top:44px;" width="13" height="13" viewBox="0 0 13 13"><path d="M1 1h11v7.5H5.5L2.5 11.5V8.5H1z" fill="none" stroke="#217346" stroke-width="1.1"/></svg>
<div class="t" style="left:1830.5px;top:44px;font-family:'Liberation Sans', sans-serif;font-size:14px;font-weight:400;font-style:normal;color:#217346;transform:scaleX(0.9677);">Comments</div>
<div class="a" style="left:961px;top:161px;width:957px;height:1px;background:#d8d8d8;"></div>
<div class="a" style="left:1056px;top:69px;width:1px;height:88px;background:#c8c6c4;"></div>
<div class="a" style="left:1288px;top:69px;width:1px;height:88px;background:#c8c6c4;"></div>
<div class="a" style="left:1415px;top:69px;width:1px;height:88px;background:#c8c6c4;"></div>
<div class="a" style="left:1516px;top:69px;width:1px;height:88px;background:#c8c6c4;"></div>
<div class="a" style="left:1696px;top:69px;width:1px;height:88px;background:#c8c6c4;"></div>
<div class="a" style="left:1790px;top:69px;width:1px;height:88px;background:#c8c6c4;"></div>
<div class="a" style="left:1880px;top:69px;width:1px;height:88px;background:#c8c6c4;"></div>
<svg class="a" style="left:979px;top:72px;" width="28" height="32" viewBox="0 0 28 32"><path d="M1 5.5h6v-1h12v1h6v22H1z" fill="#fdf6e9" stroke="#e98a1f" stroke-width="1.3"/><path d="M3.5 7.5h19v17h-19z" fill="none" stroke="#f4c87a" stroke-width="1"/><path d="M6.5 7.5v-3.5h3.5c0-2 1-3 3-3s3 1 3 3h3.5v3.5z" fill="#fafafa" stroke="#555" stroke-width="1.1"/><rect x="13.5" y="13.5" width="13" height="17" fill="#fafafa" stroke="#333" stroke-width="1.3"/></svg>
<div class="t" style="left:976.6px;top:109px;font-family:'Liberation Sans', sans-serif;font-size:12.5px;font-weight:400;font-style:normal;color:#3b3a39;transform:scaleX(0.8571);">Paste</div>
<svg class="a" style="left:987px;top:128px;" width="7" height="4.5" viewBox="0 0 7 4.5"><path d="M0.5 0.5L3.5 3.5L6.5 0.5" fill="none" stroke="#444" stroke-width="1.1"/></svg>
<svg class="a" style="left:1016px;top:72px;" width="12" height="17" viewBox="0 0 12 17"><path d="M3 1l6 9M9 1L3 10" stroke="#444" stroke-width="1"/><circle cx="2.8" cy="13.5" r="2.2" fill="none" stroke="#1c7cd6" stroke-width="1.2"/><circle cx="9.2" cy="13.5" r="2.2" fill="none" stroke="#1c7cd6" stroke-width="1.2"/></svg>
<svg class="a" style="left:1014px;top:95px;" width="17" height="17" viewBox="0 0 17 17"><path d="M4.5 13.5h-3.5v-12.5h6l1.5 1.5" fill="none" stroke="#333"/><path d="M4.5 4.5h6.5l3.5 3.5v8.5h-10z" fill="#fafafa" stroke="#333"/><path d="M7 11.5h5M7 13.5h5" stroke="#333"/></svg>
<svg class="a" style="left:1037px;top:103px;" width="7" height="4.5" viewBox="0 0 7 4.5"><path d="M0.5 0.5L3.5 3.5L6.5 0.5" fill="none" stroke="#444" stroke-width="1.1"/></svg>
<svg class="a" style="left:1014px;top:119px;" width="17" height="16" viewBox="0 0 17 16"><path d="M1 7.5l7-3.5 5 6-6 5z" fill="#fde3c1" stroke="#e5781f" stroke-width="1.3"/><path d="M3 9.5l5 3" stroke="#e5781f"/><path d="M8.5 5l6.5-4.5 1.5 2-5 5.5z" fill="#fff" stroke="#444" stroke-width="1.1"/></svg>
<div class="t" style="left:975.6px;top:148px;font-family:'Liberation Sans', sans-serif;font-size:11.5px;font-weight:400;font-style:normal;color:#444;transform:scaleX(1.0156);">Clipboard</div>
<svg class="a" style="left:1045px;top:148px;" width="9" height="9" viewBox="0 0 9 9"><path d="M0.5 6V0.5H6" fill="none" stroke="#555" stroke-width="1"/><path d="M2.5 2.5l5.5 5.5M8 4v4H4" fill="none" stroke="#555" stroke-width="1"/></svg>
<div class="a" style="left:1065px;top:77px;width:123px;height:23px;background:#fff;border:1px solid #c8c6c4"></div>
<div class="t" style="left:1068.5px;top:83px;font-family:'Liberation Sans', sans-serif;font-size:12.5px;font-weight:400;font-style:normal;color:#222;transform:scaleX(0.9453);">Calibri</div>
<svg class="a" style="left:1178px;top:88px;" width="7" height="4.5" viewBox="0 0 7 4.5"><path d="M0.5 0.5L3.5 3.5L6.5 0.5" fill="none" stroke="#444" stroke-width="1.1"/></svg>
<div class="a" style="left:1190px;top:77px;width:43px;height:23px;background:#fff;border:1px solid #c8c6c4"></div>
<div class="t" style="left:1193.8px;top:83px;font-family:'Liberation Sans', sans-serif;font-size:12.5px;font-weight:400;font-style:normal;color:#222;transform:scaleX(0.7702);">11</div>
<svg class="a" style="left:1223.5px;top:88px;" width="7" height="4.5" viewBox="0 0 7 4.5"><path d="M0.5 0.5L3.5 3.5L6.5 0.5" fill="none" stroke="#444" stroke-width="1.1"/></svg>
<svg class="a" style="left:1238px;top:79px;" width="17" height="14" viewBox="0 0 17 14"><path d="M1 13L6 1.5 11 13M3 9.5h6" fill="none" stroke="#333" stroke-width="1.2"/><path d="M12 4l2.5-2.5L17 4" fill="none" stroke="#1c7cd6" stroke-width="1.1"/></svg>
<svg class="a" style="left:1264px;top:79px;" width="15" height="14" viewBox="0 0 15 14"><path d="M1 13L5 4l4 9M2.5 10.5h5" fill="none" stroke="#333" stroke-width="1.2"/><path d="M10 1.5l2 2 2-2" fill="none" stroke="#1c7cd6" stroke-width="1.1"/></svg>
<div class="t" style="left:1072.0px;top:113px;font-family:'Liberation Sans', sans-serif;font-size:13px;font-weight:700;font-style:normal;color:#333;transform:scaleX(0.9052);">B</div>
<div class="t" style="left:1096.0px;top:113px;font-family:'Liberation Serif', serif;font-size:13px;font-weight:400;font-style:italic;color:#333;transform:scaleX(1.3813);">I</div>
<div class="t" style="left:1118.8px;top:113px;font-family:'Liberation Sans', sans-serif;font-size:13px;font-weight:400;font-style:normal;color:#333;transform:scaleX(0.9584);">U</div>
<div class="a" style="left:1118.5px;top:126px;width:9px;height:1px;background:#333;"></div>
<svg class="a" style="left:1138px;top:119px;" width="7" height="4.5" viewBox="0 0 7 4.5"><path d="M0.5 0.5L3.5 3.5L6.5 0.5" fill="none" stroke="#444" stroke-width="1.1"/></svg>
<div class="a" style="left:1154px;top:110px;width:1px;height:21px;background:#c8c6c4;"></div>
<svg class="a" style="left:1161px;top:111px;" width="17" height="17" viewBox="0 0 17 17"><path d="M0.5 0.5h15v15" fill="none" stroke="#555" stroke-width="1" stroke-dasharray="1.5 1.5"/><path d="M0.5 0.5v15M8 0.5v15M0.5 8.5h15" fill="none" stroke="#555" stroke-width="0.9" stroke-dasharray="1.5 1.5"/><path d="M0 15.5h16" stroke="#222" stroke-width="1.5"/></svg>
<svg class="a" style="left:1184px;top:119px;" width="7" height="4.5" viewBox="0 0 7 4.5"><path d="M0.5 0.5L3.5 3.5L6.5 0.5" fill="none" stroke="#444" stroke-width="1.1"/></svg>
<div class="a" style="left:1200px;top:110px;width:1px;height:21px;background:#c8c6c4;"></div>
<svg class="a" style="left:1208px;top:111px;" width="17" height="13" viewBox="0 0 17 13"><path d="M2 7l5-5 5 5-4 4z" fill="#fff" stroke="#333" stroke-width="1.1"/><path d="M12.5 4c2 1 2.5 3 2.5 5" fill="none" stroke="#1c5fb0" stroke-width="1.4"/></svg>
<div class="a" style="left:1208px;top:124px;width:16px;height:4px;background:#ffff00;"></div>
<svg class="a" style="left:1230.5px;top:119px;" width="7" height="4.5" viewBox="0 0 7 4.5"><path d="M0.5 0.5L3.5 3.5L6.5 0.5" fill="none" stroke="#444" stroke-width="1.1"/></svg>
<svg class="a" style="left:1247px;top:111px;" width="16" height="13" viewBox="0 0 16 13"><path d="M1.5 12.5L8 0.8l6.5 11.7M4 8.5h8" fill="none" stroke="#333" stroke-width="1.2"/></svg>
<div class="a" style="left:1247px;top:124px;width:16px;height:4px;background:#e00000;"></div>
<svg class="a" style="left:1269.5px;top:119px;" width="7" height="4.5" viewBox="0 0 7 4.5"><path d="M0.5 0.5L3.5 3.5L6.5 0.5" fill="none" stroke="#444" stroke-width="1.1"/></svg>
<div class="t" style="left:1152.5px;top:148px;font-family:'Liberation Sans', sans-serif;font-size:11.5px;font-weight:400;font-style:normal;color:#444;">Font</div>
<svg class="a" style="left:1277px;top:148px;" width="9" height="9" viewBox="0 0 9 9"><path d="M0.5 6V0.5H6" fill="none" stroke="#555" stroke-width="1"/><path d="M2.5 2.5l5.5 5.5M8 4v4H4" fill="none" stroke="#555" stroke-width="1"/></svg>
<svg class="a" style="left:1300px;top:71px;" width="16" height="11" viewBox="0 0 16 11"><path d="M1 1.5h14M3 5.5h10M1 9.5h14" stroke="#333" stroke-width="1.1"/></svg>
<svg class="a" style="left:1324px;top:74px;" width="16" height="11" viewBox="0 0 16 11"><path d="M1 1.5h14M3 5.5h10M1 9.5h14" stroke="#333" stroke-width="1.1"/></svg>
<div class="a" style="left:1345px;top:69px;width:22px;height:23px;background:#c8c6c4;border:1px solid #8a8886"></div>
<svg class="a" style="left:1348px;top:78px;" width="16" height="11" viewBox="0 0 16 11"><path d="M1 1.5h14M3 5.5h10M1 9.5h14" stroke="#333" stroke-width="1.1"/></svg>
<svg class="a" style="left:1374px;top:72px;" width="16" height="17" viewBox="0 0 16 17"><text x="0.5" y="7.5" font-size="8.5" font-family="Liberation Sans" fill="#333">ab</text><text x="0.5" y="15" font-size="8.5" font-family="Liberation Sans" fill="#333">c</text><path d="M9 12.5h4c1.5 0 2.5-1 2.5-2.5s-1-2.5-2.5-2.5" fill="none" stroke="#1c7cd6" stroke-width="1.1"/><path d="M11 10.5l-2 2 2 2" fill="none" stroke="#1c7cd6" stroke-width="1.1"/></svg>
<svg class="a" style="left:1300px;top:96px;" width="16" height="15" viewBox="0 0 16 15"><path d="M1 1.5h14M1 5.5h10M1 9.5h14M1 13.5h10" stroke="#333" stroke-width="1.1"/></svg>
<svg class="a" style="left:1324px;top:96px;" width="16" height="15" viewBox="0 0 16 15"><path d="M1 1.5h14M3 5.5h10M1 9.5h14M3 13.5h10" stroke="#333" stroke-width="1.1"/></svg>
<svg class="a" style="left:1348px;top:96px;" width="16" height="15" viewBox="0 0 16 15"><path d="M1 1.5h14M5 5.5h10M1 9.5h14M5 13.5h10" stroke="#333" stroke-width="1.1"/></svg>
<svg class="a" style="left:1372px;top:95px;" width="17" height="17" viewBox="0 0 17 17"><rect x="1" y="1" width="15" height="15" fill="none" stroke="#333" stroke-width="1.1"/><path d="M1 4.5h15M1 12.5h15M8.5 1v3.5M8.5 12.5V16" stroke="#333" stroke-width="1"/><rect x="1" y="4.5" width="15" height="8" fill="#fff" stroke="#1c7cd6" stroke-width="1.1"/><path d="M3 8.5h11M5 6.5l-2 2 2 2M12 6.5l2 2-2 2" fill="none" stroke="#1c7cd6" stroke-width="1.1"/></svg>
<svg class="a" style="left:1395px;top:102px;" width="7" height="4.5" viewBox="0 0 7 4.5"><path d="M0.5 0.5L3.5 3.5L6.5 0.5" fill="none" stroke="#444" stroke-width="1.1"/></svg>
<svg class="a" style="left:1300px;top:120px;" width="16" height="15" viewBox="0 0 16 15"><path d="M1 1.5h14M7 5.5h8M7 9.5h8M1 13.5h14" stroke="#333" stroke-width="1.1"/><path d="M5.5 7H1.5M3.5 5L1.5 7 3.5 9" fill="none" stroke="#1c7cd6" stroke-width="1.2"/></svg>
<svg class="a" style="left:1324px;top:120px;" width="16" height="15" viewBox="0 0 16 15"><path d="M1 1.5h14M7 5.5h8M7 9.5h8M1 13.5h14" stroke="#333" stroke-width="1.1"/><path d="M1 7H5M3 5l2 2-2 2" fill="none" stroke="#1c7cd6" stroke-width="1.2"/></svg>
<div class="a" style="left:1347px;top:118px;width:1px;height:21px;background:#c8c6c4;"></div>
<svg class="a" style="left:1353px;top:119px;" width="19" height="17" viewBox="0 0 19 17"><text x="0" y="12" font-size="9" font-family="Liberation Sans" fill="#333" transform="rotate(-40 5 9)">ab</text><path d="M7 15.5L17 5.5M13.5 5.5H17V9" fill="none" stroke="#1c7cd6" stroke-width="1.1"/></svg>
<svg class="a" style="left:1375.5px;top:127px;" width="7" height="4.5" viewBox="0 0 7 4.5"><path d="M0.5 0.5L3.5 3.5L6.5 0.5" fill="none" stroke="#444" stroke-width="1.1"/></svg>
<div class="t" style="left:1317.0px;top:148px;font-family:'Liberation Sans', sans-serif;font-size:11.5px;font-weight:400;font-style:normal;color:#444;transform:scaleX(1.0305);">Alignment</div>
<svg class="a" style="left:1404px;top:148px;" width="9" height="9" viewBox="0 0 9 9"><path d="M0.5 6V0.5H6" fill="none" stroke="#555" stroke-width="1"/><path d="M2.5 2.5l5.5 5.5M8 4v4H4" fill="none" stroke="#555" stroke-width="1"/></svg>
<div class="a" style="left:1424px;top:69px;width:85px;height:23px;background:#fff;border:1px solid #c8c6c4"></div>
<div class="t" style="left:1427.5px;top:75px;font-family:'Liberation Sans', sans-serif;font-size:12.5px;font-weight:400;font-style:normal;color:#222;transform:scaleX(0.8880);">General</div>
<svg class="a" style="left:1499px;top:79px;" width="7" height="4.5" viewBox="0 0 7 4.5"><path d="M0.5 0.5L3.5 3.5L6.5 0.5" fill="none" stroke="#444" stroke-width="1.1"/></svg>
<div class="t" style="left:1430.6px;top:98px;font-family:'Liberation Sans', sans-serif;font-size:14px;font-weight:400;font-style:normal;color:#333;transform:scaleX(0.9619);">$</div>
<svg class="a" style="left:1449.4px;top:103px;" width="7" height="4.5" viewBox="0 0 7 4.5"><path d="M0.5 0.5L3.5 3.5L6.5 0.5" fill="none" stroke="#444" stroke-width="1.1"/></svg>
<svg class="a" style="left:1465px;top:97px;" width="17" height="14" viewBox="0 0 17 14"><circle cx="4" cy="3.8" r="2.9" fill="none" stroke="#333" stroke-width="1.1"/><circle cx="12.5" cy="10" r="2.9" fill="none" stroke="#333" stroke-width="1.1"/><path d="M13 0.8L3.5 13.2" stroke="#333" stroke-width="1.1"/></svg>
<svg class="a" style="left:1494px;top:98px;" width="9" height="13" viewBox="0 0 9 13"><circle cx="5" cy="4" r="3.3" fill="#333"/><path d="M8 4.5C8 8.5 5.5 11 1.5 12.3" fill="none" stroke="#333" stroke-width="2"/></svg>
<svg class="a" style="left:1426px;top:119px;" width="17" height="17" viewBox="0 0 17 17"><text x="9.5" y="7.5" font-size="9" font-family="Liberation Sans" fill="#333">0</text><text x="1.5" y="16" font-size="9" font-family="Liberation Sans" fill="#333">.00</text><path d="M1 5.5h7M3.5 2.5L1 5l2.5 2.5" fill="none" stroke="#1c7cd6" stroke-width="1.1"/></svg>
<svg class="a" style="left:1450px;top:119px;" width="17" height="17" viewBox="0 0 17 17"><text x="2" y="7.5" font-size="9" font-family="Liberation Sans" fill="#333">.00</text><text x="8" y="16" font-size="9" font-family="Liberation Sans" fill="#333">.0</text><path d="M1 12.5h7.5M6 10l2.5 2.5L6 15" fill="none" stroke="#1c7cd6" stroke-width="1.1"/></svg>
<div class="t" style="left:1437.5px;top:148px;font-family:'Liberation Sans', sans-serif;font-size:11.5px;font-weight:400;font-style:normal;color:#444;transform:scaleX(0.9901);">Number</div>
<svg class="a" style="left:1505px;top:148px;" width="9" height="9" viewBox="0 0 9 9"><path d="M0.5 6V0.5H6" fill="none" stroke="#555" stroke-width="1"/><path d="M2.5 2.5l5.5 5.5M8 4v4H4" fill="none" stroke="#555" stroke-width="1"/></svg>
<svg class="a" style="left:1527px;top:72px;" width="17" height="15" viewBox="0 0 17 15"><rect x="0.5" y="0.5" width="15.5" height="13.5" fill="#fff" stroke="#333" stroke-width="1"/><path d="M0.5 4.5h15.5M0.5 7.5h15.5M0.5 11.5h15.5M5.5 0.5v13.5M11 0.5v13.5" stroke="#555" stroke-width="0.8"/><rect x="6" y="1" width="5" height="3" fill="#f06070"/><rect x="6" y="11" width="5" height="3" fill="#f06070"/><rect x="1" y="4.5" width="4" height="6" fill="#1c7cd6"/><path d="M5.5 1v13" stroke="#e02020" stroke-width="1"/></svg>
<div class="t" style="left:1547.5px;top:74px;font-family:'Liberation Sans', sans-serif;font-size:12.5px;font-weight:400;font-style:normal;color:#3b3a39;transform:scaleX(0.9780);">Conditional Formatting</div>
<svg class="a" style="left:1674px;top:78px;" width="7" height="4.5" viewBox="0 0 7 4.5"><path d="M0.5 0.5L3.5 3.5L6.5 0.5" fill="none" stroke="#444" stroke-width="1.1"/></svg>
<svg class="a" style="left:1527px;top:95px;" width="17" height="15" viewBox="0 0 17 15"><rect x="0.5" y="0.5" width="15.5" height="13.5" fill="#fff" stroke="#333" stroke-width="1"/><path d="M0.5 4.5h15.5M0.5 7.5h15.5M5.5 0.5v13.5M11 0.5v13.5" stroke="#555" stroke-width="0.8"/><rect x="6" y="5" width="10" height="9" fill="#8cc0ee"/><path d="M16 4L7 13" stroke="#444" stroke-width="1.6"/><path d="M3 14c1-2 2-3 4-2" fill="#1c7cd6" stroke="#1c7cd6"/></svg>
<div class="t" style="left:1547.5px;top:97px;font-family:'Liberation Sans', sans-serif;font-size:12.5px;font-weight:400;font-style:normal;color:#3b3a39;transform:scaleX(0.9093);">Format as Table</div>
<svg class="a" style="left:1632px;top:101px;" width="7" height="4.5" viewBox="0 0 7 4.5"><path d="M0.5 0.5L3.5 3.5L6.5 0.5" fill="none" stroke="#444" stroke-width="1.1"/></svg>
<svg class="a" style="left:1527px;top:118px;" width="17" height="15" viewBox="0 0 17 15"><rect x="0.5" y="0.5" width="15.5" height="13.5" fill="#fff" stroke="#333" stroke-width="1"/><path d="M0.5 3.5h15.5M3.5 0.5v13.5" stroke="#555" stroke-width="0.8"/><rect x="4" y="4" width="12" height="10" fill="#8cc0ee"/><path d="M16 4L7 13" stroke="#444" stroke-width="1.6"/><path d="M3 14c1-2 2-3 4-2" fill="#1c7cd6" stroke="#1c7cd6"/></svg>
<div class="t" style="left:1547.5px;top:120px;font-family:'Liberation Sans', sans-serif;font-size:12.5px;font-weight:400;font-style:normal;color:#3b3a39;transform:scaleX(0.8807);">Cell Styles</div>
<svg class="a" style="left:1603.5px;top:124px;" width="7" height="4.5" viewBox="0 0 7 4.5"><path d="M0.5 0.5L3.5 3.5L6.5 0.5" fill="none" stroke="#444" stroke-width="1.1"/></svg>
<div class="t" style="left:1592.0px;top:148px;font-family:'Liberation Sans', sans-serif;font-size:11.5px;font-weight:400;font-style:normal;color:#444;transform:scaleX(0.8938);">Styles</div>
<svg class="a" style="left:1707px;top:72px;" width="17" height="15" viewBox="0 0 17 15"><rect x="0.5" y="0.5" width="15.5" height="13" fill="#fff" stroke="#333" stroke-width="1"/><path d="M0.5 4.5h15.5M0.5 9.5h15.5M5.5 0.5v13M11 0.5v13" stroke="#555" stroke-width="0.8"/><rect x="9" y="4.5" width="7" height="4.5" fill="#1c7cd6"/><path d="M9 6.8H2M4 4.8l-2 2 2 2" fill="none" stroke="#1c7cd6" stroke-width="1.1"/></svg>
<div class="t" style="left:1727.0px;top:74px;font-family:'Liberation Sans', sans-serif;font-size:12.5px;font-weight:400;font-style:normal;color:#3b3a39;transform:scaleX(0.9275);">Insert</div>
<svg class="a" style="left:1766.5px;top:78px;" width="7" height="4.5" viewBox="0 0 7 4.5"><path d="M0.5 0.5L3.5 3.5L6.5 0.5" fill="none" stroke="#444" stroke-width="1.1"/></svg>
<svg class="a" style="left:1707px;top:95px;" width="17" height="15" viewBox="0 0 17 15"><rect x="0.5" y="0.5" width="15.5" height="13" fill="#fff" stroke="#333" stroke-width="1"/><path d="M0.5 4.5h15.5M0.5 9.5h15.5M5.5 0.5v13M11 0.5v13" stroke="#555" stroke-width="0.8"/><rect x="4" y="4.5" width="5" height="4.5" fill="#1c7cd6"/><path d="M11 4l4 5M15 4l-4 5" stroke="#e02020" stroke-width="1.2"/></svg>
<div class="t" style="left:1727.0px;top:97px;font-family:'Liberation Sans', sans-serif;font-size:12.5px;font-weight:400;font-style:normal;color:#3b3a39;transform:scaleX(0.9048);">Delete</div>
<svg class="a" style="left:1770.5px;top:101px;" width="7" height="4.5" viewBox="0 0 7 4.5"><path d="M0.5 0.5L3.5 3.5L6.5 0.5" fill="none" stroke="#444" stroke-width="1.1"/></svg>
<svg class="a" style="left:1707px;top:117px;" width="17" height="16" viewBox="0 0 17 16"><rect x="0.5" y="3.5" width="15.5" height="12" fill="#fff" stroke="#333" stroke-width="1"/><path d="M0.5 7.5h15.5M0.5 11.5h15.5M5.5 3.5v12M11 3.5v12" stroke="#555" stroke-width="0.8"/><rect x="3" y="6" width="11" height="5.5" fill="#1c7cd6" opacity="0.85"/><path d="M3 1.5h11M3 0v3M14 0v3" stroke="#1c7cd6" stroke-width="1"/></svg>
<div class="t" style="left:1727.0px;top:120px;font-family:'Liberation Sans', sans-serif;font-size:12.5px;font-weight:400;font-style:normal;color:#3b3a39;transform:scaleX(0.9522);">Format</div>
<svg class="a" style="left:1768px;top:124px;" width="7" height="4.5" viewBox="0 0 7 4.5"><path d="M0.5 0.5L3.5 3.5L6.5 0.5" fill="none" stroke="#444" stroke-width="1.1"/></svg>
<div class="t" style="left:1731.5px;top:148px;font-family:'Liberation Sans', sans-serif;font-size:11.5px;font-weight:400;font-style:normal;color:#444;transform:scaleX(0.8919);">Cells</div>
<svg class="a" style="left:1803px;top:72px;" width="14" height="15" viewBox="0 0 14 15"><path d="M13 1.5H1.5L7 7.5 1.5 13.5H13" fill="none" stroke="#333" stroke-width="1.2"/></svg>
<svg class="a" style="left:1824.5px;top:78px;" width="7" height="4.5" viewBox="0 0 7 4.5"><path d="M0.5 0.5L3.5 3.5L6.5 0.5" fill="none" stroke="#444" stroke-width="1.1"/></svg>
<svg class="a" style="left:1839px;top:71px;" width="18" height="17" viewBox="0 0 18 17"><text x="0.5" y="7" font-size="8" font-weight="bold" font-family="Liberation Sans" fill="#1c7cd6">A</text><text x="0.5" y="16" font-size="8" font-weight="bold" font-family="Liberation Sans" fill="#333">Z</text><path d="M8 4.5h9l-3.5 4.5v5.5l-2-1.5V9z" fill="none" stroke="#333" stroke-width="1.1"/></svg>
<svg class="a" style="left:1860.5px;top:78px;" width="7" height="4.5" viewBox="0 0 7 4.5"><path d="M0.5 0.5L3.5 3.5L6.5 0.5" fill="none" stroke="#444" stroke-width="1.1"/></svg>
<svg class="a" style="left:1802px;top:95px;" width="16" height="15" viewBox="0 0 16 15"><rect x="0.5" y="0.5" width="15" height="13.5" fill="#fff" stroke="#333" stroke-width="1.1"/><path d="M0.5 3.5h15" stroke="#333"/><path d="M8 5v7M5.5 9.5L8 12l2.5-2.5" fill="none" stroke="#1c7cd6" stroke-width="1.1"/></svg>
<svg class="a" style="left:1823px;top:101px;" width="7" height="4.5" viewBox="0 0 7 4.5"><path d="M0.5 0.5L3.5 3.5L6.5 0.5" fill="none" stroke="#444" stroke-width="1.1"/></svg>
<svg class="a" style="left:1840px;top:93px;" width="17" height="17" viewBox="0 0 17 17"><circle cx="10.5" cy="6.5" r="5.3" fill="none" stroke="#333" stroke-width="1.2"/><path d="M6.8 10.2L1 16" stroke="#333" stroke-width="1.3"/></svg>
<svg class="a" style="left:1861px;top:101px;" width="7" height="4.5" viewBox="0 0 7 4.5"><path d="M0.5 0.5L3.5 3.5L6.5 0.5" fill="none" stroke="#444" stroke-width="1.1"/></svg>
<svg class="a" style="left:1801px;top:117px;" width="17" height="16" viewBox="0 0 17 16"><path d="M1 10l8-8.5 7 6L9 14.5H5z" fill="#fff" stroke="#9a3fc0" stroke-width="1.3"/><path d="M1 10l3.5-3.5 6 6L9 14.5H5z" fill="#9a3fc0"/></svg>
<svg class="a" style="left:1823px;top:124px;" width="7" height="4.5" viewBox="0 0 7 4.5"><path d="M0.5 0.5L3.5 3.5L6.5 0.5" fill="none" stroke="#444" stroke-width="1.1"/></svg>
<div class="t" style="left:1817.0px;top:148px;font-family:'Liberation Sans', sans-serif;font-size:11.5px;font-weight:400;font-style:normal;color:#444;transform:scaleX(1.0349);">Editing</div>
<svg class="a" style="left:1900px;top:151px;" width="11" height="7" viewBox="0 0 11 7"><path d="M0.8 5.5L5.5 0.8l4.7 4.7" fill="none" stroke="#444" stroke-width="1.2"/></svg>
<div class="a" style="left:961px;top:162px;width:957px;height:66px;background:linear-gradient(#dcdcdc,#e6e6e6 6px,#e6e6e6)"></div>
<div class="a" style="left:966px;top:172px;width:102px;height:26px;background:#fff;border:1px solid #c6c6c6"></div>
<div class="t" style="left:973.4px;top:179px;font-family:'Liberation Sans', sans-serif;font-size:13px;font-weight:400;font-style:normal;color:#333;transform:scaleX(0.9263);">H25</div>
<svg class="a" style="left:1053px;top:182px;" width="9" height="5" viewBox="0 0 9 5"><path d="M0 0h8L4 4z" fill="#555"/></svg>
<div class="a" style="left:1082.5px;top:180px;width:1.5px;height:1.5px;background:#999;"></div>
<div class="a" style="left:1082.5px;top:184.5px;width:1.5px;height:1.5px;background:#999;"></div>
<div class="a" style="left:1082.5px;top:189px;width:1.5px;height:1.5px;background:#999;"></div>
<div class="a" style="left:1098px;top:172px;width:110px;height:26px;background:#fff;border:1px solid #c6c6c6"></div>
<svg class="a" style="left:1111px;top:180px;" width="12" height="11" viewBox="0 0 12 11"><path d="M1 0.8l10 9.5M11 0.8L1 10.3" stroke="#a8a8a8" stroke-width="1.3"/></svg>
<svg class="a" style="left:1146px;top:180px;" width="15" height="11" viewBox="0 0 15 11"><path d="M1 5.5l4 4.5 9-9.5" fill="none" stroke="#b0b0b0" stroke-width="1.8"/></svg>
<div class="t" style="left:1183.4px;top:179px;font-family:'Liberation Serif', serif;font-size:14px;font-weight:700;font-style:italic;color:#333;transform:scaleX(1.2843);">f</div>
<div class="t" style="left:1189.5px;top:182px;font-family:'Liberation Serif', serif;font-size:10px;font-weight:400;font-style:italic;color:#333;transform:scaleX(1.3474);">x</div>
<div class="a" style="left:1211px;top:172px;width:703px;height:26px;background:#fff;border:1px solid #c6c6c6"></div>
<svg class="a" style="left:1901px;top:182px;" width="9" height="6" viewBox="0 0 9 6"><path d="M0.8 0.8L4.5 4.5 8.2 0.8" fill="none" stroke="#555" stroke-width="1.4"/></svg>
<div class="a" style="left:961px;top:208px;width:937px;height:20px;background:#e6e6e6;"></div>
<svg class="a" style="left:971px;top:212px;" width="13" height="12" viewBox="0 0 13 12"><path d="M12 0.5V11.5H1z" fill="#b8b8b8"/></svg>
<div class="a" style="left:987px;top:228px;width:910px;height:761px;background:#fff;"></div>
<svg class="a" style="left:987px;top:228px;" width="910" height="761" viewBox="0 0 910 761"><path d="M10.5 0V761" stroke="#dadada" stroke-width="1"/><path d="M31.5 0V761" stroke="#dadada" stroke-width="1"/><path d="M81.5 0V761" stroke="#dadada" stroke-width="1"/><path d="M115.5 0V761" stroke="#dadada" stroke-width="1"/><path d="M228.5 0V761" stroke="#dadada" stroke-width="1"/><path d="M295.5 0V761" stroke="#dadada" stroke-width="1"/><path d="M329.5 0V761" stroke="#dadada" stroke-width="1"/><path d="M442.5 0V761" stroke="#dadada" stroke-width="1"/><path d="M452.5 0V761" stroke="#dadada" stroke-width="1"/><path d="M519.5 0V761" stroke="#dadada" stroke-width="1"/><path d="M586.5 0V761" stroke="#dadada" stroke-width="1"/><path d="M653.5 0V761" stroke="#dadada" stroke-width="1"/><path d="M720.5 0V761" stroke="#dadada" stroke-width="1"/><path d="M787.5 0V761" stroke="#dadada" stroke-width="1"/><path d="M854.5 0V761" stroke="#dadada" stroke-width="1"/><path d="M0 32.5H910" stroke="#dadada" stroke-width="1"/><path d="M0 76.5H910" stroke="#dadada" stroke-width="1"/><path d="M0 98.5H910" stroke="#dadada" stroke-width="1"/><path d="M0 120.5H910" stroke="#dadada" stroke-width="1"/><path d="M0 142.5H910" stroke="#dadada" stroke-width="1"/><path d="M0 164.5H910" stroke="#dadada" stroke-width="1"/><path d="M0 186.5H910" stroke="#dadada" stroke-width="1"/><path d="M0 208.5H910" stroke="#dadada" stroke-width="1"/><path d="M0 252.5H910" stroke="#dadada" stroke-width="1"/><path d="M0 296.5H910" stroke="#dadada" stroke-width="1"/><path d="M0 307.5H910" stroke="#dadada" stroke-width="1"/><path d="M0 328.5H910" stroke="#dadada" stroke-width="1"/><path d="M0 349.5H910" stroke="#dadada" stroke-width="1"/><path d="M0 370.5H910" stroke="#dadada" stroke-width="1"/><path d="M0 391.5H910" stroke="#dadada" stroke-width="1"/><path d="M0 412.5H910" stroke="#dadada" stroke-width="1"/><path d="M0 433.5H910" stroke="#dadada" stroke-width="1"/><path d="M0 454.5H910" stroke="#dadada" stroke-width="1"/><path d="M0 475.5H910" stroke="#dadada" stroke-width="1"/><path d="M0 496.5H910" stroke="#dadada" stroke-width="1"/><path d="M0 517.5H910" stroke="#dadada" stroke-width="1"/><path d="M0 538.5H910" stroke="#dadada" stroke-width="1"/><path d="M0 559.5H910" stroke="#dadada" stroke-width="1"/><path d="M0 580.5H910" stroke="#dadada" stroke-width="1"/><path d="M0 601.5H910" stroke="#dadada" stroke-width="1"/><path d="M0 622.5H910" stroke="#dadada" stroke-width="1"/><path d="M0 643.5H910" stroke="#dadada" stroke-width="1"/><path d="M0 664.5H910" stroke="#dadada" stroke-width="1"/><path d="M0 685.5H910" stroke="#dadada" stroke-width="1"/><path d="M0 706.5H910" stroke="#dadada" stroke-width="1"/><path d="M0 727.5H910" stroke="#dadada" stroke-width="1"/><path d="M0 748.5H910" stroke="#dadada" stroke-width="1"/></svg>
<div class="a" style="left:987px;top:228px;width:453px;height:32px;background:#d6931f;"></div>
<div class="a" style="left:987px;top:260px;width:453px;height:44px;background:linear-gradient(90deg,#efd7b5 0%,#f6e8d5 45%,#fefcf9 90%,#fff 100%)"></div>
<div class="a" style="left:987px;top:304px;width:453px;height:110px;background:#f7e7d4;"></div>
<div class="a" style="left:987px;top:414px;width:453px;height:22px;background:#efd4a8;"></div>
<div class="a" style="left:987px;top:436px;width:453px;height:100px;background:#f7e7d4;"></div>
<svg class="a" style="left:961px;top:208px;" width="937" height="20" viewBox="0 0 937 20"><path d="M25.5 3V19" stroke="#c6c6c6" stroke-width="1"/><path d="M36.5 3V19" stroke="#c6c6c6" stroke-width="1"/><path d="M57.5 3V19" stroke="#c6c6c6" stroke-width="1"/><path d="M107.5 3V19" stroke="#c6c6c6" stroke-width="1"/><path d="M141.5 3V19" stroke="#c6c6c6" stroke-width="1"/><path d="M254.5 3V19" stroke="#c6c6c6" stroke-width="1"/><path d="M321.5 3V19" stroke="#c6c6c6" stroke-width="1"/><path d="M355.5 3V19" stroke="#c6c6c6" stroke-width="1"/><path d="M468.5 3V19" stroke="#c6c6c6" stroke-width="1"/><path d="M478.5 3V19" stroke="#c6c6c6" stroke-width="1"/><path d="M545.5 3V19" stroke="#c6c6c6" stroke-width="1"/><path d="M612.5 3V19" stroke="#c6c6c6" stroke-width="1"/><path d="M679.5 3V19" stroke="#c6c6c6" stroke-width="1"/><path d="M746.5 3V19" stroke="#c6c6c6" stroke-width="1"/><path d="M813.5 3V19" stroke="#c6c6c6" stroke-width="1"/><path d="M880.5 3V19" stroke="#c6c6c6" stroke-width="1"/><path d="M936.5 3V19" stroke="#c6c6c6" stroke-width="1"/></svg>
<div class="a" style="left:961px;top:227px;width:937px;height:1px;background:#ababab;"></div>
<div class="a" style="left:986px;top:208px;width:1px;height:781px;background:#ababab;"></div>
<div class="t" style="left:987.3px;top:211px;font-family:'Liberation Sans', sans-serif;font-size:14px;font-weight:400;font-style:normal;color:#222;">A</div>
<div class="t" style="left:1003.3px;top:211px;font-family:'Liberation Sans', sans-serif;font-size:14px;font-weight:400;font-style:normal;color:#222;">B</div>
<div class="t" style="left:1038.4px;top:211px;font-family:'Liberation Sans', sans-serif;font-size:14px;font-weight:400;font-style:normal;color:#222;">C</div>
<div class="t" style="left:1080.4px;top:211px;font-family:'Liberation Sans', sans-serif;font-size:14px;font-weight:400;font-style:normal;color:#222;">D</div>
<div class="t" style="left:1154.3px;top:211px;font-family:'Liberation Sans', sans-serif;font-size:14px;font-weight:400;font-style:normal;color:#222;">E</div>
<div class="t" style="left:1244.7px;top:211px;font-family:'Liberation Sans', sans-serif;font-size:14px;font-weight:400;font-style:normal;color:#222;">F</div>
<div class="t" style="left:1294.1px;top:211px;font-family:'Liberation Sans', sans-serif;font-size:14px;font-weight:400;font-style:normal;color:#222;">G</div>
<div class="t" style="left:1367.9px;top:211px;font-family:'Liberation Sans', sans-serif;font-size:14px;font-weight:400;font-style:normal;color:#222;">H</div>
<div class="t" style="left:1432.6px;top:211px;font-family:'Liberation Sans', sans-serif;font-size:14px;font-weight:400;font-style:normal;color:#222;">I</div>
<div class="t" style="left:1469.5px;top:211px;font-family:'Liberation Sans', sans-serif;font-size:14px;font-weight:400;font-style:normal;color:#222;">J</div>
<div class="t" style="left:1535.3px;top:211px;font-family:'Liberation Sans', sans-serif;font-size:14px;font-weight:400;font-style:normal;color:#222;">K</div>
<div class="t" style="left:1603.1px;top:211px;font-family:'Liberation Sans', sans-serif;font-size:14px;font-weight:400;font-style:normal;color:#222;">L</div>
<div class="t" style="left:1668.2px;top:211px;font-family:'Liberation Sans', sans-serif;font-size:14px;font-weight:400;font-style:normal;color:#222;">M</div>
<div class="t" style="left:1735.9px;top:211px;font-family:'Liberation Sans', sans-serif;font-size:14px;font-weight:400;font-style:normal;color:#222;">N</div>
<div class="t" style="left:1802.6px;top:211px;font-family:'Liberation Sans', sans-serif;font-size:14px;font-weight:400;font-style:normal;color:#222;">O</div>
<div class="t" style="left:1864.8px;top:211px;font-family:'Liberation Sans', sans-serif;font-size:14px;font-weight:400;font-style:normal;color:#222;">P</div>
<div class="a" style="left:961px;top:228px;width:25px;height:761px;background:#e6e6e6;"></div>
<div class="a" style="left:961px;top:260px;width:25px;height:1px;background:#c0c0c0;"></div>
<div class="a" style="left:961px;top:304px;width:25px;height:1px;background:#c0c0c0;"></div>
<div class="a" style="left:961px;top:326px;width:25px;height:1px;background:#c0c0c0;"></div>
<div class="a" style="left:961px;top:348px;width:25px;height:1px;background:#c0c0c0;"></div>
<div class="a" style="left:961px;top:370px;width:25px;height:1px;background:#c0c0c0;"></div>
<div class="a" style="left:961px;top:392px;width:25px;height:1px;background:#c0c0c0;"></div>
<div class="a" style="left:961px;top:414px;width:25px;height:1px;background:#c0c0c0;"></div>
<div class="a" style="left:961px;top:436px;width:25px;height:1px;background:#c0c0c0;"></div>
<div class="a" style="left:961px;top:480px;width:25px;height:1px;background:#c0c0c0;"></div>
<div class="a" style="left:961px;top:524px;width:25px;height:1px;background:#c0c0c0;"></div>
<div class="a" style="left:961px;top:535px;width:25px;height:1px;background:#c0c0c0;"></div>
<div class="a" style="left:961px;top:556px;width:25px;height:1px;background:#c0c0c0;"></div>
<div class="a" style="left:961px;top:577px;width:25px;height:1px;background:#c0c0c0;"></div>
<div class="a" style="left:961px;top:598px;width:25px;height:1px;background:#c0c0c0;"></div>
<div class="a" style="left:961px;top:619px;width:25px;height:1px;background:#c0c0c0;"></div>
<div class="a" style="left:961px;top:640px;width:25px;height:1px;background:#c0c0c0;"></div>
<div class="a" style="left:961px;top:661px;width:25px;height:1px;background:#c0c0c0;"></div>
<div class="a" style="left:961px;top:682px;width:25px;height:1px;background:#c0c0c0;"></div>
<div class="a" style="left:961px;top:703px;width:25px;height:1px;background:#c0c0c0;"></div>
<div class="a" style="left:961px;top:724px;width:25px;height:1px;background:#c0c0c0;"></div>
<div class="a" style="left:961px;top:745px;width:25px;height:1px;background:#c0c0c0;"></div>
<div class="a" style="left:961px;top:766px;width:25px;height:1px;background:#c0c0c0;"></div>
<div class="a" style="left:961px;top:787px;width:25px;height:1px;background:#c0c0c0;"></div>
<div class="a" style="left:961px;top:808px;width:25px;height:1px;background:#c0c0c0;"></div>
<div class="a" style="left:961px;top:829px;width:25px;height:1px;background:#c0c0c0;"></div>
<div class="a" style="left:961px;top:850px;width:25px;height:1px;background:#c0c0c0;"></div>
<div class="a" style="left:961px;top:871px;width:25px;height:1px;background:#c0c0c0;"></div>
<div class="a" style="left:961px;top:892px;width:25px;height:1px;background:#c0c0c0;"></div>
<div class="a" style="left:961px;top:913px;width:25px;height:1px;background:#c0c0c0;"></div>
<div class="a" style="left:961px;top:934px;width:25px;height:1px;background:#c0c0c0;"></div>
<div class="a" style="left:961px;top:955px;width:25px;height:1px;background:#c0c0c0;"></div>
<div class="a" style="left:961px;top:976px;width:25px;height:1px;background:#c0c0c0;"></div>
<div class="t" style="left:969.6px;top:244px;font-family:'Liberation Sans', sans-serif;font-size:14px;font-weight:400;font-style:normal;color:#222;">1</div>
<div class="t" style="left:969.6px;top:288px;font-family:'Liberation Sans', sans-serif;font-size:14px;font-weight:400;font-style:normal;color:#222;">2</div>
<div class="t" style="left:969.6px;top:310px;font-family:'Liberation Sans', sans-serif;font-size:14px;font-weight:400;font-style:normal;color:#222;">3</div>
<div class="t" style="left:969.6px;top:332px;font-family:'Liberation Sans', sans-serif;font-size:14px;font-weight:400;font-style:normal;color:#222;">4</div>
<div class="t" style="left:969.6px;top:354px;font-family:'Liberation Sans', sans-serif;font-size:14px;font-weight:400;font-style:normal;color:#222;">5</div>
<div class="t" style="left:969.6px;top:376px;font-family:'Liberation Sans', sans-serif;font-size:14px;font-weight:400;font-style:normal;color:#222;">6</div>
<div class="t" style="left:969.6px;top:398px;font-family:'Liberation Sans', sans-serif;font-size:14px;font-weight:400;font-style:normal;color:#222;">7</div>
<div class="t" style="left:969.6px;top:420px;font-family:'Liberation Sans', sans-serif;font-size:14px;font-weight:400;font-style:normal;color:#222;">8</div>
<div class="t" style="left:969.6px;top:464px;font-family:'Liberation Sans', sans-serif;font-size:14px;font-weight:400;font-style:normal;color:#222;">9</div>
<div class="t" style="left:965.7px;top:508px;font-family:'Liberation Sans', sans-serif;font-size:14px;font-weight:400;font-style:normal;color:#222;">10</div>
<div class="a" style="left:961px;top:525px;width:25px;height:10px;overflow:hidden"><div class="t" style="left:0;width:25px;text-align:center;top:-6px;font-family:Liberation Sans;font-size:14px;color:#222">11</div></div>
<div class="t" style="left:965.7px;top:540px;font-family:'Liberation Sans', sans-serif;font-size:14px;font-weight:400;font-style:normal;color:#222;">12</div>
<div class="t" style="left:965.7px;top:561px;font-family:'Liberation Sans', sans-serif;font-size:14px;font-weight:400;font-style:normal;color:#222;">13</div>
<div class="t" style="left:965.7px;top:582px;font-family:'Liberation Sans', sans-serif;font-size:14px;font-weight:400;font-style:normal;color:#222;">14</div>
<div class="t" style="left:965.7px;top:603px;font-family:'Liberation Sans', sans-serif;font-size:14px;font-weight:400;font-style:normal;color:#222;">15</div>
<div class="t" style="left:965.7px;top:624px;font-family:'Liberation Sans', sans-serif;font-size:14px;font-weight:400;font-style:normal;color:#222;">16</div>
<div class="t" style="left:965.7px;top:645px;font-family:'Liberation Sans', sans-serif;font-size:14px;font-weight:400;font-style:normal;color:#222;">17</div>
<div class="t" style="left:965.7px;top:666px;font-family:'Liberation Sans', sans-serif;font-size:14px;font-weight:400;font-style:normal;color:#222;">18</div>
<div class="t" style="left:965.7px;top:687px;font-family:'Liberation Sans', sans-serif;font-size:14px;font-weight:400;font-style:normal;color:#222;">19</div>
<div class="t" style="left:965.7px;top:708px;font-family:'Liberation Sans', sans-serif;font-size:14px;font-weight:400;font-style:normal;color:#222;">20</div>
<div class="t" style="left:965.7px;top:729px;font-family:'Liberation Sans', sans-serif;font-size:14px;font-weight:400;font-style:normal;color:#222;">21</div>
<div class="t" style="left:965.7px;top:750px;font-family:'Liberation Sans', sans-serif;font-size:14px;font-weight:400;font-style:normal;color:#222;">22</div>
<div class="t" style="left:965.7px;top:771px;font-family:'Liberation Sans', sans-serif;font-size:14px;font-weight:400;font-style:normal;color:#222;">23</div>
<div class="t" style="left:965.7px;top:792px;font-family:'Liberation Sans', sans-serif;font-size:14px;font-weight:400;font-style:normal;color:#222;">24</div>
<div class="t" style="left:965.7px;top:813px;font-family:'Liberation Sans', sans-serif;font-size:14px;font-weight:400;font-style:normal;color:#222;">25</div>
<div class="t" style="left:965.7px;top:834px;font-family:'Liberation Sans', sans-serif;font-size:14px;font-weight:400;font-style:normal;color:#222;">26</div>
<div class="t" style="left:965.7px;top:855px;font-family:'Liberation Sans', sans-serif;font-size:14px;font-weight:400;font-style:normal;color:#222;">27</div>
<div class="t" style="left:965.7px;top:876px;font-family:'Liberation Sans', sans-serif;font-size:14px;font-weight:400;font-style:normal;color:#222;">28</div>
<div class="t" style="left:965.7px;top:897px;font-family:'Liberation Sans', sans-serif;font-size:14px;font-weight:400;font-style:normal;color:#222;">29</div>
<div class="t" style="left:965.7px;top:918px;font-family:'Liberation Sans', sans-serif;font-size:14px;font-weight:400;font-style:normal;color:#222;">30</div>
<div class="t" style="left:965.7px;top:939px;font-family:'Liberation Sans', sans-serif;font-size:14px;font-weight:400;font-style:normal;color:#222;">31</div>
<div class="t" style="left:965.7px;top:960px;font-family:'Liberation Sans', sans-serif;font-size:14px;font-weight:400;font-style:normal;color:#222;">32</div>
<div class="a" style="left:961px;top:977px;width:25px;height:12px;overflow:hidden"><div class="t" style="left:0;width:25px;text-align:center;top:5px;font-family:Liberation Sans;font-size:14px;color:#222">33</div></div>
<div class="a" style="left:1897px;top:227px;width:1px;height:762px;background:#ababab;"></div>
<div class="a" style="left:961px;top:989px;width:937px;height:1px;background:#9e9e9e;"></div>
<div class="a" style="left:1898px;top:208px;width:20px;height:781px;background:#e6e6e6;"></div>
<div class="a" style="left:1901px;top:210px;width:15px;height:15px;background:#fff;border:1px solid #c6c6c6"></div>
<svg class="a" style="left:1905px;top:215px;" width="8" height="5" viewBox="0 0 8 5"><path d="M0 4.5L4 0.5 8 4.5z" fill="#666"/></svg>
<div class="a" style="left:1901px;top:226px;width:15px;height:724px;background:#fff;border:1px solid #c6c6c6"></div>
<div class="a" style="left:1901px;top:975px;width:15px;height:14px;background:#fff;border:1px solid #c6c6c6"></div>
<svg class="a" style="left:1905px;top:980px;" width="8" height="5" viewBox="0 0 8 5"><path d="M0 0.5L4 4.5 8 0.5z" fill="#666"/></svg>
<div class="t" style="left:1003.0px;top:234px;font-family:'Liberation Sans', sans-serif;font-size:19px;font-weight:700;font-style:normal;color:#fff;">Ebon Armor</div>
<div class="t" style="left:1284.7px;top:238px;font-family:'Liberation Sans', sans-serif;font-size:13.5px;font-weight:700;font-style:normal;color:#fff;transform:scaleX(1.0382);">Level  3+ Uncommon</div>
<div class="t" style="left:1000.6px;top:266px;font-family:'Liberation Sans', sans-serif;font-size:13.5px;font-weight:400;font-style:italic;color:#0a0a0a;transform:scaleX(1.0278);-webkit-text-stroke:0.3px #0a0a0a;">This black armor’s breastplate is detailed with small skulls at its joints</div>
<div class="t" style="left:1000.6px;top:285px;font-family:'Liberation Sans', sans-serif;font-size:13.5px;font-weight:400;font-style:italic;color:#0a0a0a;transform:scaleX(1.0204);-webkit-text-stroke:0.3px #0a0a0a;">and breastplate, as if it had been crafted for an undead warrior.</div>
<div class="t" style="left:1010.6px;top:308px;font-family:'Liberation Sans', sans-serif;font-size:13.5px;font-weight:400;font-style:normal;color:#0a0a0a;transform:scaleX(0.9231);-webkit-text-stroke:0.3px #0a0a0a;">Level 3</div>
<div class="t" style="left:1079.4px;top:308px;font-family:'Liberation Sans', sans-serif;font-size:13.5px;font-weight:400;font-style:normal;color:#0a0a0a;transform:scaleX(0.8698);-webkit-text-stroke:0.3px #0a0a0a;">+1</div>
<div class="t" style="left:1169.9px;top:308px;font-family:'Liberation Sans', sans-serif;font-size:13.5px;font-weight:400;font-style:normal;color:#0a0a0a;transform:scaleX(1.0291);-webkit-text-stroke:0.3px #0a0a0a;">680 gp</div>
<div class="t" style="left:1229.3px;top:308px;font-family:'Liberation Sans', sans-serif;font-size:13.5px;font-weight:400;font-style:normal;color:#0a0a0a;transform:scaleX(0.8972);-webkit-text-stroke:0.3px #0a0a0a;">Level 18</div>
<div class="t" style="left:1292.6px;top:308px;font-family:'Liberation Sans', sans-serif;font-size:13.5px;font-weight:400;font-style:normal;color:#0a0a0a;transform:scaleX(0.9542);-webkit-text-stroke:0.3px #0a0a0a;">+4</div>
<div class="t" style="left:1361.4px;top:308px;font-family:'Liberation Sans', sans-serif;font-size:13.5px;font-weight:400;font-style:normal;color:#0a0a0a;transform:scaleX(1.0722);-webkit-text-stroke:0.3px #0a0a0a;">85,000 gp</div>
<div class="t" style="left:1010.6px;top:330px;font-family:'Liberation Sans', sans-serif;font-size:13.5px;font-weight:400;font-style:normal;color:#0a0a0a;transform:scaleX(0.9392);-webkit-text-stroke:0.3px #0a0a0a;">Level 8</div>
<div class="t" style="left:1079.4px;top:330px;font-family:'Liberation Sans', sans-serif;font-size:13.5px;font-weight:400;font-style:normal;color:#0a0a0a;transform:scaleX(1.0191);-webkit-text-stroke:0.3px #0a0a0a;">+2</div>
<div class="t" style="left:1156.8px;top:330px;font-family:'Liberation Sans', sans-serif;font-size:13.5px;font-weight:400;font-style:normal;color:#0a0a0a;transform:scaleX(1.0578);-webkit-text-stroke:0.3px #0a0a0a;">3,400 gp</div>
<div class="t" style="left:1229.3px;top:330px;font-family:'Liberation Sans', sans-serif;font-size:13.5px;font-weight:400;font-style:normal;color:#0a0a0a;transform:scaleX(0.9227);-webkit-text-stroke:0.3px #0a0a0a;">Level 23</div>
<div class="t" style="left:1292.6px;top:330px;font-family:'Liberation Sans', sans-serif;font-size:13.5px;font-weight:400;font-style:normal;color:#0a0a0a;transform:scaleX(0.9542);-webkit-text-stroke:0.3px #0a0a0a;">+5</div>
<div class="t" style="left:1353.8px;top:330px;font-family:'Liberation Sans', sans-serif;font-size:13.5px;font-weight:400;font-style:normal;color:#0a0a0a;transform:scaleX(1.0654);-webkit-text-stroke:0.3px #0a0a0a;">425,000 gp</div>
<div class="t" style="left:1010.6px;top:352px;font-family:'Liberation Sans', sans-serif;font-size:13.5px;font-weight:400;font-style:normal;color:#0a0a0a;transform:scaleX(0.8835);-webkit-text-stroke:0.3px #0a0a0a;">Level 13</div>
<div class="t" style="left:1079.4px;top:352px;font-family:'Liberation Sans', sans-serif;font-size:13.5px;font-weight:400;font-style:normal;color:#0a0a0a;transform:scaleX(0.9542);-webkit-text-stroke:0.3px #0a0a0a;">+3</div>
<div class="t" style="left:1151.9px;top:352px;font-family:'Liberation Sans', sans-serif;font-size:13.5px;font-weight:400;font-style:normal;color:#0a0a0a;transform:scaleX(1.0073);-webkit-text-stroke:0.3px #0a0a0a;">17,000 gp</div>
<div class="t" style="left:1229.3px;top:352px;font-family:'Liberation Sans', sans-serif;font-size:13.5px;font-weight:400;font-style:normal;color:#0a0a0a;transform:scaleX(0.9481);-webkit-text-stroke:0.3px #0a0a0a;">Level 28</div>
<div class="t" style="left:1292.6px;top:352px;font-family:'Liberation Sans', sans-serif;font-size:13.5px;font-weight:400;font-style:normal;color:#0a0a0a;transform:scaleX(0.9542);-webkit-text-stroke:0.3px #0a0a0a;">+6</div>
<div class="t" style="left:1345.7px;top:352px;font-family:'Liberation Sans', sans-serif;font-size:13.5px;font-weight:400;font-style:normal;color:#0a0a0a;transform:scaleX(1.0161);-webkit-text-stroke:0.3px #0a0a0a;">2,125,000 gp</div>
<div class="t" style="left:1001.1px;top:375px;font-family:'Liberation Sans', sans-serif;font-size:13.5px;font-weight:700;font-style:normal;color:#0a0a0a;transform:scaleX(1.0221);">Armor</div>
<div class="t" style="left:1042.5px;top:375px;font-family:'Liberation Sans', sans-serif;font-size:13.5px;font-weight:400;font-style:normal;color:#0a0a0a;transform:scaleX(1.0221);-webkit-text-stroke:0.3px #0a0a0a;">: Chain, scale, or plate</div>
<div class="t" style="left:1001.6px;top:397px;font-family:'Liberation Sans', sans-serif;font-size:13.5px;font-weight:700;font-style:normal;color:#0a0a0a;transform:scaleX(1.0470);">Enhancement Bonus</div>
<div class="t" style="left:1142.2px;top:397px;font-family:'Liberation Sans', sans-serif;font-size:13.5px;font-weight:400;font-style:normal;color:#0a0a0a;transform:scaleX(1.0470);-webkit-text-stroke:0.3px #0a0a0a;">: AC</div>
<div class="t" style="left:1001.6px;top:419px;font-family:'Liberation Sans', sans-serif;font-size:13.5px;font-weight:700;font-style:normal;color:#0a0a0a;transform:scaleX(1.0913);">Property</div>
<svg class="a" style="left:1002px;top:441.5px;" width="11" height="11" viewBox="0 0 11 11"><path d="M5.5 0.5Q6 5 10.5 5.5Q6 6 5.5 10.5Q5 6 0.5 5.5Q5 5 5.5 0.5z" fill="#111"/></svg>
<svg class="a" style="left:1002px;top:485.6px;" width="11" height="11" viewBox="0 0 11 11"><path d="M5.5 0.5Q6 5 10.5 5.5Q6 6 5.5 10.5Q5 6 0.5 5.5Q5 5 5.5 0.5z" fill="#111"/></svg>
<div class="t" style="left:1022.4px;top:440px;font-family:'Liberation Sans', sans-serif;font-size:13.5px;font-weight:400;font-style:normal;color:#0a0a0a;transform:scaleX(1.0179);-webkit-text-stroke:0.3px #0a0a0a;">You gain necrotic resistance equal to 3 + twice this armor’s</div>
<div class="t" style="left:1022.4px;top:458px;font-family:'Liberation Sans', sans-serif;font-size:13.5px;font-weight:400;font-style:normal;color:#0a0a0a;transform:scaleX(1.0166);-webkit-text-stroke:0.3px #0a0a0a;">enhancement bonus.</div>
<div class="t" style="left:1022.4px;top:484px;font-family:'Liberation Sans', sans-serif;font-size:13.5px;font-weight:400;font-style:normal;color:#0a0a0a;transform:scaleX(1.0049);-webkit-text-stroke:0.3px #0a0a0a;">When an enemy adjacent to you dies, you gain temporary hit</div>
<div class="t" style="left:1022.4px;top:502px;font-family:'Liberation Sans', sans-serif;font-size:13.5px;font-weight:400;font-style:normal;color:#0a0a0a;transform:scaleX(1.0187);-webkit-text-stroke:0.3px #0a0a0a;">points equal to 3 + this armor’s enhancement bonus.</div>
<div class="a" style="left:961px;top:990px;width:957px;height:27px;background:#e6e6e6;"></div>
<svg class="a" style="left:987px;top:997px;" width="6" height="10" viewBox="0 0 6 10"><path d="M5 0.5v9L0.5 5z" fill="#b4b4b4"/></svg>
<svg class="a" style="left:1016px;top:997px;" width="6" height="10" viewBox="0 0 6 10"><path d="M0.5 0.5v9L5 5z" fill="#b4b4b4"/></svg>
<div class="a" style="left:1061px;top:993px;width:1px;height:19px;background:#9a9a9a;"></div>
<div class="t" style="left:1075.4px;top:997px;font-family:'Liberation Sans', sans-serif;font-size:12.5px;font-weight:400;font-style:normal;color:#444;transform:scaleX(1.0621);">Master Template</div>
<div class="a" style="left:1189px;top:993px;width:1px;height:19px;background:#9a9a9a;"></div>
<div class="t" style="left:1202.0px;top:997px;font-family:'Liberation Sans', sans-serif;font-size:12.5px;font-weight:400;font-style:normal;color:#444;transform:scaleX(1.0526);">Armors</div>
<div class="a" style="left:1258px;top:989px;width:80px;height:25px;background:#fff;"></div>
<div class="a" style="left:1258px;top:989px;width:1px;height:24px;background:#9e9e9e;"></div>
<div class="a" style="left:1337px;top:989px;width:1px;height:24px;background:#9e9e9e;"></div>
<div class="a" style="left:1258px;top:1012px;width:80px;height:2px;background:#217346;"></div>
<div class="t" style="left:1270.3px;top:997px;font-family:'Liberation Sans', sans-serif;font-size:12.5px;font-weight:700;font-style:normal;color:#217346;">Armors 2</div>
<svg class="a" style="left:1370px;top:994px;" width="18" height="18" viewBox="0 0 18 18"><circle cx="9" cy="9" r="7.8" fill="none" stroke="#555" stroke-width="1.2"/><path d="M9 5v8M5 9h8" stroke="#555" stroke-width="1.4"/></svg>
<div class="a" style="left:1536px;top:998px;width:1.5px;height:1.5px;background:#999;"></div>
<div class="a" style="left:1536px;top:1002.5px;width:1.5px;height:1.5px;background:#999;"></div>
<div class="a" style="left:1536px;top:1007px;width:1.5px;height:1.5px;background:#999;"></div>
<div class="a" style="left:1553px;top:996px;width:345px;height:15px;background:#dcdcdc;border:1px solid #c6c6c6"></div>
<div class="a" style="left:1553px;top:996px;width:15px;height:15px;background:#fff;border:1px solid #c6c6c6"></div>
<svg class="a" style="left:1558px;top:1000px;" width="5" height="8" viewBox="0 0 5 8"><path d="M4.5 0v7.5L0.5 3.8z" fill="#555"/></svg>
<div class="a" style="left:1568px;top:996px;width:294px;height:15px;background:#fff;border:1px solid #c6c6c6"></div>
<div class="a" style="left:1883px;top:996px;width:15px;height:15px;background:#fff;border:1px solid #c6c6c6"></div>
<svg class="a" style="left:1888px;top:1000px;" width="5" height="8" viewBox="0 0 5 8"><path d="M0.5 0v7.5L4.5 3.8z" fill="#555"/></svg>
<div class="a" style="left:961px;top:1017px;width:957px;height:22px;background:#f3f2f1;"></div>
<div class="a" style="left:961px;top:1017px;width:957px;height:1px;background:#cccccc;"></div>
<div class="t" style="left:969.2px;top:1022px;font-family:'Liberation Sans', sans-serif;font-size:12px;font-weight:400;font-style:normal;color:#444;transform:scaleX(0.8879);">Ready</div>
<div class="a" style="left:1608px;top:1018px;width:40px;height:21px;background:#cfcfcf;"></div>
<svg class="a" style="left:1621px;top:1021px;" width="14" height="14" viewBox="0 0 14 14"><rect x="0.5" y="0.5" width="13" height="13" fill="none" stroke="#444"/><path d="M0.5 4.8h13M0.5 9.2h13M4.8 0.5v13M9.2 0.5v13" stroke="#444"/></svg>
<svg class="a" style="left:1661px;top:1021px;" width="14" height="14" viewBox="0 0 14 14"><rect x="0.5" y="0.5" width="13" height="13" fill="none" stroke="#444"/><rect x="3" y="3" width="8" height="8" fill="none" stroke="#444"/><path d="M4.5 5h5M4.5 7h5M4.5 9h5" stroke="#444" stroke-width="0.8"/></svg>
<svg class="a" style="left:1701px;top:1021px;" width="14" height="14" viewBox="0 0 14 14"><rect x="0.5" y="0.5" width="13" height="13" fill="none" stroke="#444"/><path d="M5 0.5v6h4v-6" fill="none" stroke="#444"/></svg>
<div class="a" style="left:1734px;top:1027px;width:8px;height:1px;background:#555;"></div>
<div class="a" style="left:1747px;top:1027px;width:100px;height:1px;background:#777;"></div>
<div class="a" style="left:1796px;top:1023px;width:5px;height:10px;background:#666;"></div>
<svg class="a" style="left:1851px;top:1023px;" width="9" height="9" viewBox="0 0 9 9"><path d="M4.5 0v9M0 4.5h9" stroke="#555" stroke-width="1.1"/></svg>
<div class="t" style="left:1873.7px;top:1022px;font-family:'Liberation Sans', sans-serif;font-size:12px;font-weight:400;font-style:normal;color:#444;transform:scaleX(0.8468);">104%</div>
<div class="a" style="left:961px;top:1039px;width:957px;height:1px;background:#8a8a8a;"></div>
<div class="a" style="left:1917px;top:1px;width:1px;height:1039px;background:#8a8a8a;"></div></body></html>
